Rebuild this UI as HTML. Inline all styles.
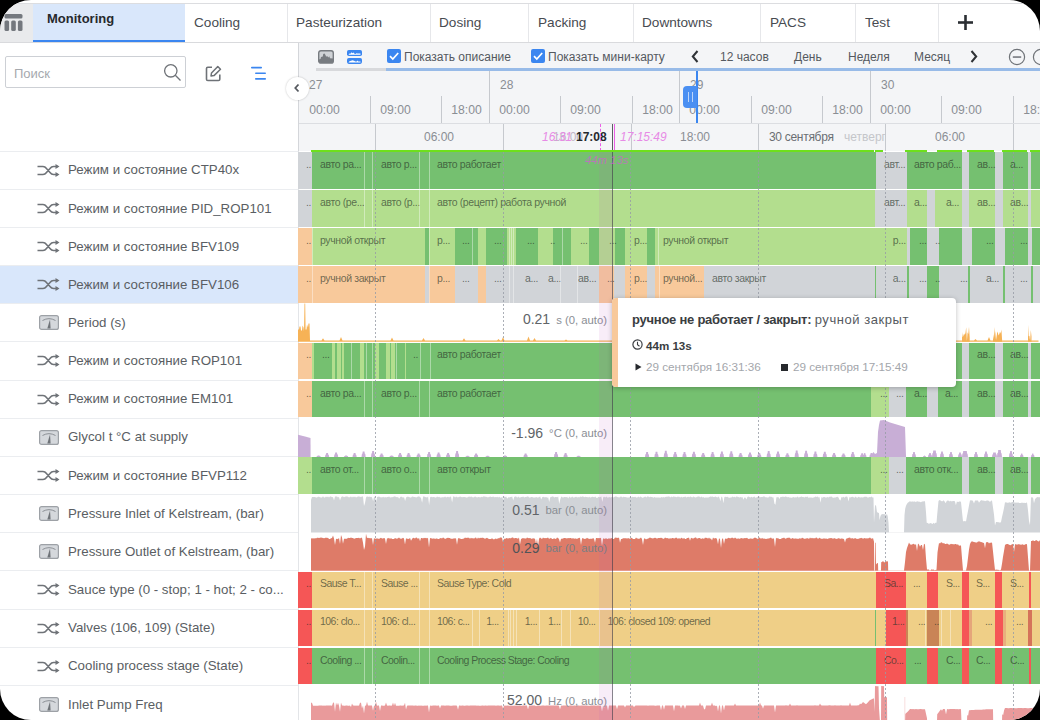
<!DOCTYPE html>
<html><head><meta charset="utf-8">
<style>
*{box-sizing:border-box;margin:0;padding:0}
html,body{width:1040px;height:720px;background:#000;overflow:hidden}
body{font-family:"Liberation Sans",sans-serif}
#scr{position:absolute;left:0;top:0;width:1040px;height:720px;border-radius:31px;overflow:hidden;background:#fff}
.a{position:absolute}
.t{position:absolute;white-space:nowrap;line-height:1}
.tab{position:absolute;top:0;height:38px;border-right:1px solid #e6e7ea;font-size:13.6px;color:#3e4247}
.tab span{position:absolute;top:13px;line-height:1}
.lt{position:absolute;left:68px;font-size:13.3px;color:#5a5e63;white-space:nowrap;line-height:1}
.lbl{position:absolute;font-size:12px;color:#8a8e94;white-space:nowrap;line-height:1}
.st{position:absolute;font-size:10.5px;letter-spacing:-0.38px;color:rgba(40,50,40,.66);white-space:nowrap;line-height:1}
</style></head><body>
<div id="scr">

<div class="a" style="left:0;top:3px;width:1040px;height:1px;background:#dcdde0"></div>
<div class="a" style="left:0;top:42px;width:1040px;height:1px;background:#d9dadd"></div>
<div class="a" style="left:0;top:4px;width:33px;height:38px;background:#e9eaec"></div>
<svg class="a" style="left:4px;top:14px" width="19" height="18" viewBox="0 0 19 18"><rect x="0.5" y="0" width="18" height="4.5" rx="1.5" fill="#74787e"/><rect x="0.5" y="6.5" width="4.6" height="10.5" rx="1.5" fill="#74787e"/><rect x="7.2" y="6.5" width="4.6" height="10.5" rx="1.5" fill="#74787e"/><rect x="13.9" y="6.5" width="4.6" height="10.5" rx="1.5" fill="#74787e"/></svg>
<div class="a" style="left:33px;top:4px;width:152px;height:38px;background:#d9e7fb"></div>
<div class="a" style="left:33px;top:40px;width:152px;height:2px;background:#3b86f0"></div>
<div class="t" style="left:47px;top:12px;font-weight:bold;color:#26292d;font-size:13px">Monitoring</div>
<div class="a" style="left:287px;top:4px;width:1px;height:38px;background:#e6e7ea"></div>
<div class="t" style="left:194px;top:16px;font-size:13.6px;color:#474b51">Cooling</div>
<div class="a" style="left:430px;top:4px;width:1px;height:38px;background:#e6e7ea"></div>
<div class="t" style="left:296px;top:16px;font-size:13.6px;color:#474b51">Pasteurization</div>
<div class="a" style="left:528px;top:4px;width:1px;height:38px;background:#e6e7ea"></div>
<div class="t" style="left:439px;top:16px;font-size:13.6px;color:#474b51">Dosing</div>
<div class="a" style="left:633px;top:4px;width:1px;height:38px;background:#e6e7ea"></div>
<div class="t" style="left:538px;top:16px;font-size:13.6px;color:#474b51">Packing</div>
<div class="a" style="left:760px;top:4px;width:1px;height:38px;background:#e6e7ea"></div>
<div class="t" style="left:642px;top:16px;font-size:13.6px;color:#474b51">Downtowns</div>
<div class="a" style="left:855px;top:4px;width:1px;height:38px;background:#e6e7ea"></div>
<div class="t" style="left:770px;top:16px;font-size:13.6px;color:#474b51">PACS</div>
<div class="a" style="left:938px;top:4px;width:1px;height:38px;background:#e6e7ea"></div>
<div class="t" style="left:865px;top:16px;font-size:13.6px;color:#474b51">Test</div>
<svg class="a" style="left:958px;top:15px" width="15" height="15" viewBox="0 0 15 15"><rect x="6.2" y="0" width="2.6" height="15" fill="#2b2e33"/><rect x="0" y="6.2" width="15" height="2.6" fill="#2b2e33"/></svg>
<div class="a" style="left:5px;top:56px;width:181px;height:32px;border:1px solid #cdd0d5;border-radius:2px;background:#fff"></div>
<div class="t" style="left:14px;top:67px;font-size:13px;color:#a6a9ae">Поиск</div>
<svg class="a" style="left:163px;top:63px" width="19" height="19" viewBox="0 0 19 19"><circle cx="7.8" cy="7.8" r="6.2" fill="none" stroke="#6f7378" stroke-width="1.3"/><line x1="12.3" y1="12.3" x2="17.5" y2="17.5" stroke="#6f7378" stroke-width="1.3"/></svg>
<svg class="a" style="left:205px;top:65px" width="17" height="17" viewBox="0 0 17 17"><path d="M7 2.2H2.8Q1.5 2.2 1.5 3.5V14.2Q1.5 15.5 2.8 15.5H13.5Q14.8 15.5 14.8 14.2V9.5" fill="none" stroke="#6e7277" stroke-width="1.6"/><path d="M6 11L6.5 8L12.8 1.5L15.5 4.2L9 10.6Z" fill="none" stroke="#6e7277" stroke-width="1.5" stroke-linejoin="round"/></svg>
<svg class="a" style="left:250px;top:66px" width="18" height="14" viewBox="0 0 18 14"><rect x="1" y="0.8" width="11" height="1.7" rx="0.8" fill="#3b86f0"/><rect x="5" y="6.4" width="11" height="1.7" rx="0.8" fill="#3b86f0"/><rect x="5" y="12" width="11" height="1.7" rx="0.8" fill="#3b86f0"/></svg>
<div class="a" style="left:298px;top:43px;width:742px;height:108px;background:#f4f5f7"></div>
<div class="a" style="left:298px;top:43px;width:1px;height:108px;background:#d4d6da"></div>
<div class="a" style="left:316px;top:68px;width:70px;height:3px;background:#d8d9dc"></div>
<div class="a" style="left:386px;top:68px;width:654px;height:3px;background:#98bbe8"></div>
<svg class="a" style="left:318px;top:49.5px" width="16" height="14" viewBox="0 0 16 14"><rect x="0.7" y="0.7" width="14.6" height="12.4" rx="2.2" fill="#cfd2d6" stroke="#777b80" stroke-width="1.4"/><path d="M0.7 9.5L2.5 9L3 7L4.8 6.5L5.2 4L6.5 3.6L7.5 5L8 6.5L9.5 6.2L10.3 7.5L11.3 6.3L12 8.2L15.3 8.5L15.3 11Q15.3 13.1 13.2 13.1L2.8 13.1Q0.7 13.1 0.7 11Z" fill="#777b80"/></svg>
<svg class="a" style="left:347px;top:49.5px" width="15" height="14" viewBox="0 0 15 14"><rect x="0" y="0" width="15" height="6" rx="1.8" fill="#3b86f0"/><rect x="0" y="7.9" width="15" height="6" rx="1.8" fill="#3b86f0"/><path d="M1.5 4.8L2.5 3.6L3.8 3.4L4.5 2.3L5.5 3.2L6.5 2.6L7.5 3.8L8.5 4L9.5 3.2L10.5 3.4L13.5 3.4L13.5 4.8Z" fill="#fff"/><path d="M1.5 12.4L2.5 11.3L4 10.8L5.5 10.3L7 10.8L8.5 11.6L9.7 11.5L10.5 10.5L11.2 11.6L13.5 11.6L13.5 12.4Z" fill="#fff"/></svg>
<svg class="a" style="left:387px;top:49px" width="14" height="14" viewBox="0 0 14 14"><rect x="0" y="0" width="14" height="14" rx="2" fill="#3b86f0"/><path d="M3 7.2L5.8 10L11.2 4" fill="none" stroke="#fff" stroke-width="1.7"/></svg>
<div class="t" style="left:404px;top:51px;font-size:12px;color:#55595f">Показать описание</div>
<svg class="a" style="left:531px;top:49px" width="14" height="14" viewBox="0 0 14 14"><rect x="0" y="0" width="14" height="14" rx="2" fill="#3b86f0"/><path d="M3 7.2L5.8 10L11.2 4" fill="none" stroke="#fff" stroke-width="1.7"/></svg>
<div class="t" style="left:548px;top:51px;font-size:12px;color:#55595f">Показать мини-карту</div>
<svg class="a" style="left:691px;top:50px" width="8" height="13" viewBox="0 0 8 13"><path d="M6.5 1L1.8 6.5L6.5 12" fill="none" stroke="#2f3236" stroke-width="2"/></svg>
<div class="t" style="left:720px;top:51px;font-size:12px;color:#55595f">12 часов</div>
<div class="t" style="left:794px;top:51px;font-size:12px;color:#55595f">День</div>
<div class="t" style="left:848px;top:51px;font-size:12px;color:#55595f">Неделя</div>
<div class="t" style="left:914px;top:51px;font-size:12px;color:#55595f">Месяц</div>
<svg class="a" style="left:970px;top:50px" width="8" height="13" viewBox="0 0 8 13"><path d="M1.5 1L6.2 6.5L1.5 12" fill="none" stroke="#2f3236" stroke-width="2"/></svg>
<svg class="a" style="left:1008px;top:48px" width="18" height="18" viewBox="0 0 18 18"><circle cx="9" cy="9" r="7.6" fill="none" stroke="#6f7378" stroke-width="1.2"/><rect x="4.8" y="8.3" width="8.4" height="1.5" fill="#6f7378"/></svg>
<svg class="a" style="left:1032px;top:48px" width="18" height="18" viewBox="0 0 18 18"><circle cx="9" cy="9" r="7.6" fill="none" stroke="#6f7378" stroke-width="1.2"/></svg>
<div class="a" style="left:299px;top:123px;width:741px;height:1px;background:#dcdee2"></div>
<div class="t" style="left:309px;top:79px;font-size:12px;color:#8a8e94">27</div>
<div class="a" style="left:489.0px;top:71px;width:1px;height:52px;background:#c6c9ce"></div>
<div class="t" style="left:500.0px;top:79px;font-size:12px;color:#8a8e94">28</div>
<div class="a" style="left:679.1px;top:71px;width:1px;height:52px;background:#c6c9ce"></div>
<div class="t" style="left:690.1px;top:79px;font-size:12px;color:#8a8e94">29</div>
<div class="a" style="left:870.0px;top:71px;width:1px;height:52px;background:#c6c9ce"></div>
<div class="t" style="left:881.0px;top:79px;font-size:12px;color:#8a8e94">30</div>
<div class="t" style="left:309.2px;top:104px;font-size:12.2px;color:#8a8e94">00:00</div>
<div class="a" style="left:370px;top:96px;width:1px;height:27px;background:#c6c9ce"></div>
<div class="t" style="left:380.2px;top:104px;font-size:12.2px;color:#8a8e94">09:00</div>
<div class="a" style="left:441px;top:96px;width:1px;height:27px;background:#c6c9ce"></div>
<div class="t" style="left:451.2px;top:104px;font-size:12.2px;color:#8a8e94">18:00</div>
<div class="t" style="left:499.2px;top:104px;font-size:12.2px;color:#8a8e94">00:00</div>
<div class="a" style="left:560px;top:96px;width:1px;height:27px;background:#c6c9ce"></div>
<div class="t" style="left:570.2px;top:104px;font-size:12.2px;color:#8a8e94">09:00</div>
<div class="a" style="left:632px;top:96px;width:1px;height:27px;background:#c6c9ce"></div>
<div class="t" style="left:642.2px;top:104px;font-size:12.2px;color:#8a8e94">18:00</div>
<div class="t" style="left:689.2px;top:104px;font-size:12.2px;color:#8a8e94">00:00</div>
<div class="a" style="left:751px;top:96px;width:1px;height:27px;background:#c6c9ce"></div>
<div class="t" style="left:761.2px;top:104px;font-size:12.2px;color:#8a8e94">09:00</div>
<div class="a" style="left:822px;top:96px;width:1px;height:27px;background:#c6c9ce"></div>
<div class="t" style="left:832.2px;top:104px;font-size:12.2px;color:#8a8e94">18:00</div>
<div class="t" style="left:880.2px;top:104px;font-size:12.2px;color:#8a8e94">00:00</div>
<div class="a" style="left:941px;top:96px;width:1px;height:27px;background:#c6c9ce"></div>
<div class="t" style="left:951.2px;top:104px;font-size:12.2px;color:#8a8e94">09:00</div>
<div class="a" style="left:1013px;top:96px;width:1px;height:27px;background:#c6c9ce"></div>
<div class="t" style="left:1023.2px;top:104px;font-size:12.2px;color:#8a8e94">18:00</div>
<div class="a" style="left:695.5px;top:71px;width:2px;height:52px;background:#3b86f0"></div>
<div class="a" style="left:683px;top:86px;width:13.5px;height:21.5px;background:#4a8ff2;border-radius:4px 0 0 4px"></div>
<div class="a" style="left:688px;top:92px;width:1px;height:10px;background:#bcd5fa"></div><div class="a" style="left:692px;top:92px;width:1px;height:10px;background:#bcd5fa"></div>
<div class="a" style="left:374.8px;top:124px;width:1px;height:27px;background:#c6c9ce"></div>
<div class="a" style="left:503.0px;top:124px;width:1px;height:27px;background:#c6c9ce"></div>
<div class="a" style="left:630.5px;top:124px;width:1px;height:27px;background:#c6c9ce"></div>
<div class="a" style="left:758.0px;top:124px;width:1px;height:27px;background:#c6c9ce"></div>
<div class="a" style="left:885.3px;top:124px;width:1px;height:27px;background:#c6c9ce"></div>
<div class="a" style="left:1012.8px;top:124px;width:1px;height:27px;background:#c6c9ce"></div>
<div class="t" style="left:424px;top:131px;font-size:12px;color:#8a8e94">06:00</div>
<div class="t" style="left:680px;top:131px;font-size:12px;color:#8a8e94">18:00</div>
<div class="t" style="left:935px;top:131px;font-size:12px;color:#8a8e94">06:00</div>
<div class="t" style="left:769px;top:131px;font-size:12px;color:#6a6e73;letter-spacing:-0.3px">30 сентября</div>
<div class="a" style="left:844px;top:124px;width:42px;height:26px;overflow:hidden"><div class="t" style="left:0;top:7px;font-size:12px;color:#c4c6ca">четверг</div></div>
<div class="t" style="left:553px;top:131px;font-size:12px;color:#c0b6c6">16:00</div>
<div class="t" style="left:542px;top:131px;font-size:12px;color:#e78be6;font-style:italic">16:31</div>
<div class="t" style="left:576px;top:131px;font-size:12px;color:#26292d;font-weight:bold">17:08</div>
<div class="t" style="left:620px;top:131px;font-size:12px;color:#e78be6;font-style:italic">17:15:49</div>
<div class="a" style="left:599.5px;top:124px;width:0;height:27px;border-left:1.2px dashed #ec5fe8"></div>
<div class="a" style="left:613.5px;top:124px;width:1.5px;height:27px;background:#ec5fe8"></div>
<div class="a" style="left:612px;top:124px;width:1px;height:27px;background:#5b5e63"></div>
<div class="a" style="left:285.5px;top:76.5px;width:23px;height:23px;border-radius:50%;background:#fff;box-shadow:0 0 2px rgba(0,0,0,.25)"></div>
<svg class="a" style="left:293px;top:83px" width="8" height="10" viewBox="0 0 8 10"><path d="M5.5 1.5L2.3 5L5.5 8.5" fill="none" stroke="#55595f" stroke-width="1.8"/></svg>
<div class="a" style="left:0;top:150.7px;width:298px;height:1px;background:#ebedf0"></div>
<svg class="a" style="left:37px;top:163.7px" width="23" height="13" viewBox="0 0 23 13"><path d="M0.5 2.5H6Q8 2.5 9.5 4.5L13 8.5Q14.5 10.5 16.5 10.5H21M0.5 10.5H6Q8 10.5 9.5 8.5L13 4.5Q14.5 2.5 16.5 2.5H21" fill="none" stroke="#6f7378" stroke-width="1.6"/><path d="M18.5 0L22.5 2.5L18.5 5Z M18.5 8L22.5 10.5L18.5 13Z" fill="#6f7378"/></svg>
<div class="lt" style="top:163.4px">Режим и состояние CTP40x</div>
<div class="a" style="left:0;top:188.8px;width:298px;height:1px;background:#ebedf0"></div>
<svg class="a" style="left:37px;top:201.8px" width="23" height="13" viewBox="0 0 23 13"><path d="M0.5 2.5H6Q8 2.5 9.5 4.5L13 8.5Q14.5 10.5 16.5 10.5H21M0.5 10.5H6Q8 10.5 9.5 8.5L13 4.5Q14.5 2.5 16.5 2.5H21" fill="none" stroke="#6f7378" stroke-width="1.6"/><path d="M18.5 0L22.5 2.5L18.5 5Z M18.5 8L22.5 10.5L18.5 13Z" fill="#6f7378"/></svg>
<div class="lt" style="top:201.5px">Режим и состояние PID_ROP101</div>
<div class="a" style="left:0;top:227.0px;width:298px;height:1px;background:#ebedf0"></div>
<svg class="a" style="left:37px;top:240.0px" width="23" height="13" viewBox="0 0 23 13"><path d="M0.5 2.5H6Q8 2.5 9.5 4.5L13 8.5Q14.5 10.5 16.5 10.5H21M0.5 10.5H6Q8 10.5 9.5 8.5L13 4.5Q14.5 2.5 16.5 2.5H21" fill="none" stroke="#6f7378" stroke-width="1.6"/><path d="M18.5 0L22.5 2.5L18.5 5Z M18.5 8L22.5 10.5L18.5 13Z" fill="#6f7378"/></svg>
<div class="lt" style="top:239.7px">Режим и состояние BFV109</div>
<div class="a" style="left:0;top:265.6px;width:298px;height:38.15px;background:#d9e7fb"></div>
<div class="a" style="left:0;top:265.1px;width:298px;height:1px;background:#ebedf0"></div>
<svg class="a" style="left:37px;top:278.1px" width="23" height="13" viewBox="0 0 23 13"><path d="M0.5 2.5H6Q8 2.5 9.5 4.5L13 8.5Q14.5 10.5 16.5 10.5H21M0.5 10.5H6Q8 10.5 9.5 8.5L13 4.5Q14.5 2.5 16.5 2.5H21" fill="none" stroke="#6f7378" stroke-width="1.6"/><path d="M18.5 0L22.5 2.5L18.5 5Z M18.5 8L22.5 10.5L18.5 13Z" fill="#6f7378"/></svg>
<div class="lt" style="top:277.8px">Режим и состояние BFV106</div>
<div class="a" style="left:0;top:303.3px;width:298px;height:1px;background:#ebedf0"></div>
<svg class="a" style="left:38.5px;top:315.3px" width="20" height="15" viewBox="0 0 20 15"><rect x="0.6" y="0.6" width="18.8" height="13.8" rx="2" fill="#d5d8dc" stroke="#9da1a6" stroke-width="1.2"/><path d="M3.5 5.5Q10 1.8 16.5 5.5" fill="none" stroke="#8c9096" stroke-width="1"/><path d="M8.3 13.5L11 4.5L11.6 13.5Z" fill="#6f7378"/></svg>
<div class="lt" style="top:316.0px">Period (s)</div>
<div class="a" style="left:0;top:341.4px;width:298px;height:1px;background:#ebedf0"></div>
<svg class="a" style="left:37px;top:354.4px" width="23" height="13" viewBox="0 0 23 13"><path d="M0.5 2.5H6Q8 2.5 9.5 4.5L13 8.5Q14.5 10.5 16.5 10.5H21M0.5 10.5H6Q8 10.5 9.5 8.5L13 4.5Q14.5 2.5 16.5 2.5H21" fill="none" stroke="#6f7378" stroke-width="1.6"/><path d="M18.5 0L22.5 2.5L18.5 5Z M18.5 8L22.5 10.5L18.5 13Z" fill="#6f7378"/></svg>
<div class="lt" style="top:354.1px">Режим и состояние ROP101</div>
<div class="a" style="left:0;top:379.6px;width:298px;height:1px;background:#ebedf0"></div>
<svg class="a" style="left:37px;top:392.6px" width="23" height="13" viewBox="0 0 23 13"><path d="M0.5 2.5H6Q8 2.5 9.5 4.5L13 8.5Q14.5 10.5 16.5 10.5H21M0.5 10.5H6Q8 10.5 9.5 8.5L13 4.5Q14.5 2.5 16.5 2.5H21" fill="none" stroke="#6f7378" stroke-width="1.6"/><path d="M18.5 0L22.5 2.5L18.5 5Z M18.5 8L22.5 10.5L18.5 13Z" fill="#6f7378"/></svg>
<div class="lt" style="top:392.3px">Режим и состояние EM101</div>
<div class="a" style="left:0;top:417.8px;width:298px;height:1px;background:#ebedf0"></div>
<svg class="a" style="left:38.5px;top:429.8px" width="20" height="15" viewBox="0 0 20 15"><rect x="0.6" y="0.6" width="18.8" height="13.8" rx="2" fill="#d5d8dc" stroke="#9da1a6" stroke-width="1.2"/><path d="M3.5 5.5Q10 1.8 16.5 5.5" fill="none" stroke="#8c9096" stroke-width="1"/><path d="M8.3 13.5L11 4.5L11.6 13.5Z" fill="#6f7378"/></svg>
<div class="lt" style="top:430.4px">Glycol t °C at supply</div>
<div class="a" style="left:0;top:455.9px;width:298px;height:1px;background:#ebedf0"></div>
<svg class="a" style="left:37px;top:468.9px" width="23" height="13" viewBox="0 0 23 13"><path d="M0.5 2.5H6Q8 2.5 9.5 4.5L13 8.5Q14.5 10.5 16.5 10.5H21M0.5 10.5H6Q8 10.5 9.5 8.5L13 4.5Q14.5 2.5 16.5 2.5H21" fill="none" stroke="#6f7378" stroke-width="1.6"/><path d="M18.5 0L22.5 2.5L18.5 5Z M18.5 8L22.5 10.5L18.5 13Z" fill="#6f7378"/></svg>
<div class="lt" style="top:468.6px">Режим и состояние BFVP112</div>
<div class="a" style="left:0;top:494.0px;width:298px;height:1px;background:#ebedf0"></div>
<svg class="a" style="left:38.5px;top:506.0px" width="20" height="15" viewBox="0 0 20 15"><rect x="0.6" y="0.6" width="18.8" height="13.8" rx="2" fill="#d5d8dc" stroke="#9da1a6" stroke-width="1.2"/><path d="M3.5 5.5Q10 1.8 16.5 5.5" fill="none" stroke="#8c9096" stroke-width="1"/><path d="M8.3 13.5L11 4.5L11.6 13.5Z" fill="#6f7378"/></svg>
<div class="lt" style="top:506.7px">Pressure Inlet of Kelstream, (bar)</div>
<div class="a" style="left:0;top:532.2px;width:298px;height:1px;background:#ebedf0"></div>
<svg class="a" style="left:38.5px;top:544.2px" width="20" height="15" viewBox="0 0 20 15"><rect x="0.6" y="0.6" width="18.8" height="13.8" rx="2" fill="#d5d8dc" stroke="#9da1a6" stroke-width="1.2"/><path d="M3.5 5.5Q10 1.8 16.5 5.5" fill="none" stroke="#8c9096" stroke-width="1"/><path d="M8.3 13.5L11 4.5L11.6 13.5Z" fill="#6f7378"/></svg>
<div class="lt" style="top:544.9px">Pressure Outlet of Kelstream, (bar)</div>
<div class="a" style="left:0;top:570.3px;width:298px;height:1px;background:#ebedf0"></div>
<svg class="a" style="left:37px;top:583.3px" width="23" height="13" viewBox="0 0 23 13"><path d="M0.5 2.5H6Q8 2.5 9.5 4.5L13 8.5Q14.5 10.5 16.5 10.5H21M0.5 10.5H6Q8 10.5 9.5 8.5L13 4.5Q14.5 2.5 16.5 2.5H21" fill="none" stroke="#6f7378" stroke-width="1.6"/><path d="M18.5 0L22.5 2.5L18.5 5Z M18.5 8L22.5 10.5L18.5 13Z" fill="#6f7378"/></svg>
<div class="lt" style="top:583.0px">Sauce type (0 - stop; 1 - hot; 2 - co...</div>
<div class="a" style="left:0;top:608.5px;width:298px;height:1px;background:#ebedf0"></div>
<svg class="a" style="left:37px;top:621.5px" width="23" height="13" viewBox="0 0 23 13"><path d="M0.5 2.5H6Q8 2.5 9.5 4.5L13 8.5Q14.5 10.5 16.5 10.5H21M0.5 10.5H6Q8 10.5 9.5 8.5L13 4.5Q14.5 2.5 16.5 2.5H21" fill="none" stroke="#6f7378" stroke-width="1.6"/><path d="M18.5 0L22.5 2.5L18.5 5Z M18.5 8L22.5 10.5L18.5 13Z" fill="#6f7378"/></svg>
<div class="lt" style="top:621.2px">Valves (106, 109) (State)</div>
<div class="a" style="left:0;top:646.6px;width:298px;height:1px;background:#ebedf0"></div>
<svg class="a" style="left:37px;top:659.6px" width="23" height="13" viewBox="0 0 23 13"><path d="M0.5 2.5H6Q8 2.5 9.5 4.5L13 8.5Q14.5 10.5 16.5 10.5H21M0.5 10.5H6Q8 10.5 9.5 8.5L13 4.5Q14.5 2.5 16.5 2.5H21" fill="none" stroke="#6f7378" stroke-width="1.6"/><path d="M18.5 0L22.5 2.5L18.5 5Z M18.5 8L22.5 10.5L18.5 13Z" fill="#6f7378"/></svg>
<div class="lt" style="top:659.4px">Cooling process stage (State)</div>
<div class="a" style="left:0;top:684.8px;width:298px;height:1px;background:#ebedf0"></div>
<svg class="a" style="left:38.5px;top:696.8px" width="20" height="15" viewBox="0 0 20 15"><rect x="0.6" y="0.6" width="18.8" height="13.8" rx="2" fill="#d5d8dc" stroke="#9da1a6" stroke-width="1.2"/><path d="M3.5 5.5Q10 1.8 16.5 5.5" fill="none" stroke="#8c9096" stroke-width="1"/><path d="M8.3 13.5L11 4.5L11.6 13.5Z" fill="#6f7378"/></svg>
<div class="lt" style="top:697.5px">Inlet Pump Freq</div>
<div class="a" style="left:298px;top:151px;width:1px;height:569px;background:#e3e5e8"></div>
<div class="a" style="left:298px;top:152.0px;width:14px;height:36.6px;background:#d1d4d8"></div>
<div class="a" style="left:312px;top:152.0px;width:564px;height:36.6px;background:#75c070"></div>
<div class="a" style="left:876px;top:152.0px;width:31px;height:36.6px;background:#d1d4d8"></div>
<div class="a" style="left:907px;top:152.0px;width:55px;height:36.6px;background:#75c070"></div>
<div class="a" style="left:962px;top:152.0px;width:7px;height:36.6px;background:#d1d4d8"></div>
<div class="a" style="left:969px;top:152.0px;width:26px;height:36.6px;background:#75c070"></div>
<div class="a" style="left:995px;top:152.0px;width:8px;height:36.6px;background:#d1d4d8"></div>
<div class="a" style="left:1003px;top:152.0px;width:25px;height:36.6px;background:#75c070"></div>
<div class="a" style="left:1028px;top:152.0px;width:3px;height:36.6px;background:#d1d4d8"></div>
<div class="a" style="left:1031px;top:152.0px;width:9px;height:36.6px;background:#75c070"></div>
<div class="st" style="left:306px;top:158.6px">..</div>
<div class="st" style="left:320px;top:158.6px">авто ра...</div>
<div class="st" style="left:381px;top:158.6px">авто р...</div>
<div class="st" style="left:437px;top:158.6px">авто работает</div>
<div class="st" style="left:884px;top:158.6px">авт...</div>
<div class="st" style="left:914px;top:158.6px">авто раб...</div>
<div class="st" style="left:977px;top:158.6px">ав...</div>
<div class="st" style="left:1010px;top:158.6px">а...</div>
<div class="a" style="left:363.5px;top:152.0px;width:1px;height:36.6px;background:rgba(255,255,255,.4)"></div>
<div class="a" style="left:372.0px;top:152.0px;width:1px;height:36.6px;background:rgba(255,255,255,.4)"></div>
<div class="a" style="left:419.4px;top:152.0px;width:1px;height:36.6px;background:rgba(255,255,255,.4)"></div>
<div class="a" style="left:429.4px;top:152.0px;width:1px;height:36.6px;background:rgba(255,255,255,.4)"></div>
<div class="a" style="left:298px;top:190.2px;width:14px;height:36.6px;background:#d1d4d8"></div>
<div class="a" style="left:312px;top:190.2px;width:563px;height:36.6px;background:#b3de8e"></div>
<div class="a" style="left:875px;top:190.2px;width:32px;height:36.6px;background:#d1d4d8"></div>
<div class="a" style="left:907px;top:190.2px;width:20px;height:36.6px;background:#b3de8e"></div>
<div class="a" style="left:927px;top:190.2px;width:8px;height:36.6px;background:#d1d4d8"></div>
<div class="a" style="left:935px;top:190.2px;width:27px;height:36.6px;background:#b3de8e"></div>
<div class="a" style="left:962px;top:190.2px;width:7px;height:36.6px;background:#d1d4d8"></div>
<div class="a" style="left:969px;top:190.2px;width:26px;height:36.6px;background:#b3de8e"></div>
<div class="a" style="left:995px;top:190.2px;width:8px;height:36.6px;background:#d1d4d8"></div>
<div class="a" style="left:1003px;top:190.2px;width:25px;height:36.6px;background:#b3de8e"></div>
<div class="a" style="left:1028px;top:190.2px;width:3px;height:36.6px;background:#d1d4d8"></div>
<div class="a" style="left:1031px;top:190.2px;width:9px;height:36.6px;background:#b3de8e"></div>
<div class="st" style="left:306px;top:196.8px">..</div>
<div class="st" style="left:320px;top:196.8px">авто (ре...</div>
<div class="st" style="left:381px;top:196.8px">авто (р...</div>
<div class="st" style="left:437px;top:196.8px">авто (рецепт) работа ручной</div>
<div class="st" style="left:884px;top:196.8px">авт...</div>
<div class="st" style="left:914px;top:196.8px">а...</div>
<div class="st" style="left:946px;top:196.8px">а...</div>
<div class="st" style="left:977px;top:196.8px">ав...</div>
<div class="st" style="left:1010px;top:196.8px">ав...</div>
<div class="a" style="left:363.5px;top:190.2px;width:1px;height:36.6px;background:rgba(255,255,255,.4)"></div>
<div class="a" style="left:372.0px;top:190.2px;width:1px;height:36.6px;background:rgba(255,255,255,.4)"></div>
<div class="a" style="left:419.4px;top:190.2px;width:1px;height:36.6px;background:rgba(255,255,255,.4)"></div>
<div class="a" style="left:429.4px;top:190.2px;width:1px;height:36.6px;background:rgba(255,255,255,.4)"></div>
<div class="a" style="left:298px;top:228.3px;width:14px;height:36.6px;background:#f8c99b"></div>
<div class="a" style="left:312px;top:228.3px;width:113px;height:36.6px;background:#b3de8e"></div>
<div class="a" style="left:425px;top:228.3px;width:4px;height:36.6px;background:#75c070"></div>
<div class="a" style="left:429px;top:228.3px;width:26px;height:36.6px;background:#b3de8e"></div>
<div class="a" style="left:455px;top:228.3px;width:23px;height:36.6px;background:#75c070"></div>
<div class="a" style="left:478px;top:228.3px;width:8px;height:36.6px;background:#b3de8e"></div>
<div class="a" style="left:486px;top:228.3px;width:21px;height:36.6px;background:#75c070"></div>
<div class="a" style="left:507px;top:228.3px;width:9px;height:36.6px;background:#b3de8e"></div>
<div class="a" style="left:516px;top:228.3px;width:22px;height:36.6px;background:#75c070"></div>
<div class="a" style="left:538px;top:228.3px;width:15px;height:36.6px;background:#b3de8e"></div>
<div class="a" style="left:553px;top:228.3px;width:18px;height:36.6px;background:#75c070"></div>
<div class="a" style="left:571px;top:228.3px;width:18px;height:36.6px;background:#b3de8e"></div>
<div class="a" style="left:589px;top:228.3px;width:10px;height:36.6px;background:#75c070"></div>
<div class="a" style="left:599px;top:228.3px;width:16px;height:36.6px;background:#b3de8e"></div>
<div class="a" style="left:615px;top:228.3px;width:10px;height:36.6px;background:#75c070"></div>
<div class="a" style="left:625px;top:228.3px;width:22px;height:36.6px;background:#b3de8e"></div>
<div class="a" style="left:647px;top:228.3px;width:8px;height:36.6px;background:#75c070"></div>
<div class="a" style="left:655px;top:228.3px;width:252px;height:36.6px;background:#b3de8e"></div>
<div class="a" style="left:907px;top:228.3px;width:3px;height:36.6px;background:#d1d4d8"></div>
<div class="a" style="left:910px;top:228.3px;width:17px;height:36.6px;background:#75c070"></div>
<div class="a" style="left:927px;top:228.3px;width:12px;height:36.6px;background:#d1d4d8"></div>
<div class="a" style="left:939px;top:228.3px;width:23px;height:36.6px;background:#75c070"></div>
<div class="a" style="left:962px;top:228.3px;width:10px;height:36.6px;background:#d1d4d8"></div>
<div class="a" style="left:972px;top:228.3px;width:23px;height:36.6px;background:#75c070"></div>
<div class="a" style="left:995px;top:228.3px;width:10px;height:36.6px;background:#d1d4d8"></div>
<div class="a" style="left:1005px;top:228.3px;width:23px;height:36.6px;background:#75c070"></div>
<div class="a" style="left:1028px;top:228.3px;width:4px;height:36.6px;background:#d1d4d8"></div>
<div class="a" style="left:1032px;top:228.3px;width:8px;height:36.6px;background:#75c070"></div>
<div class="st" style="left:306px;top:234.9px">..</div>
<div class="st" style="left:320px;top:234.9px">ручной открыт</div>
<div class="st" style="left:437px;top:234.9px">р...</div>
<div class="st" style="left:462px;top:234.9px">...</div>
<div class="st" style="left:494px;top:234.9px">...</div>
<div class="st" style="left:527px;top:234.9px">...</div>
<div class="st" style="left:550px;top:234.9px">..</div>
<div class="st" style="left:580px;top:234.9px">...</div>
<div class="st" style="left:609px;top:234.9px">...</div>
<div class="st" style="left:634px;top:234.9px">р...</div>
<div class="st" style="left:663px;top:234.9px">ручной открыт</div>
<div class="st" style="left:892.7px;top:234.9px">р...</div>
<div class="st" style="left:919px;top:234.9px">...</div>
<div class="st" style="left:935px;top:234.9px">..</div>
<div class="st" style="left:986px;top:234.9px">...</div>
<div class="st" style="left:1020px;top:234.9px">...</div>
<div class="a" style="left:312.0px;top:228.3px;width:1px;height:36.6px;background:rgba(255,255,255,.4)"></div>
<div class="a" style="left:429.0px;top:228.3px;width:1px;height:36.6px;background:rgba(255,255,255,.4)"></div>
<div class="a" style="left:472.0px;top:228.3px;width:1px;height:36.6px;background:rgba(255,255,255,.4)"></div>
<div class="a" style="left:509.0px;top:228.3px;width:1px;height:36.6px;background:rgba(255,255,255,.4)"></div>
<div class="a" style="left:511.0px;top:228.3px;width:1px;height:36.6px;background:rgba(255,255,255,.4)"></div>
<div class="a" style="left:513.0px;top:228.3px;width:1px;height:36.6px;background:rgba(255,255,255,.4)"></div>
<div class="a" style="left:562.0px;top:228.3px;width:1px;height:36.6px;background:rgba(255,255,255,.4)"></div>
<div class="a" style="left:658.0px;top:228.3px;width:1px;height:36.6px;background:rgba(255,255,255,.4)"></div>
<div class="a" style="left:298px;top:266.4px;width:14px;height:36.6px;background:#f8c99b"></div>
<div class="a" style="left:312px;top:266.4px;width:113px;height:36.6px;background:#f8c99b"></div>
<div class="a" style="left:425px;top:266.4px;width:4px;height:36.6px;background:#d1d4d8"></div>
<div class="a" style="left:429px;top:266.4px;width:26px;height:36.6px;background:#f8c99b"></div>
<div class="a" style="left:455px;top:266.4px;width:23px;height:36.6px;background:#d1d4d8"></div>
<div class="a" style="left:478px;top:266.4px;width:8px;height:36.6px;background:#f8c99b"></div>
<div class="a" style="left:486px;top:266.4px;width:113px;height:36.6px;background:#d1d4d8"></div>
<div class="a" style="left:599px;top:266.4px;width:15px;height:36.6px;background:#f8c99b"></div>
<div class="a" style="left:614px;top:266.4px;width:11px;height:36.6px;background:#d1d4d8"></div>
<div class="a" style="left:625px;top:266.4px;width:22px;height:36.6px;background:#f8c99b"></div>
<div class="a" style="left:647px;top:266.4px;width:8px;height:36.6px;background:#d1d4d8"></div>
<div class="a" style="left:655px;top:266.4px;width:49px;height:36.6px;background:#f8c99b"></div>
<div class="a" style="left:704px;top:266.4px;width:171px;height:36.6px;background:#d1d4d8"></div>
<div class="a" style="left:875px;top:266.4px;width:1px;height:36.6px;background:#75c070"></div>
<div class="a" style="left:876px;top:266.4px;width:31px;height:36.6px;background:#d1d4d8"></div>
<div class="a" style="left:907px;top:266.4px;width:2px;height:36.6px;background:#75c070"></div>
<div class="a" style="left:909px;top:266.4px;width:18px;height:36.6px;background:#d1d4d8"></div>
<div class="a" style="left:927px;top:266.4px;width:12px;height:36.6px;background:#75c070"></div>
<div class="a" style="left:939px;top:266.4px;width:29px;height:36.6px;background:#d1d4d8"></div>
<div class="a" style="left:968px;top:266.4px;width:2px;height:36.6px;background:#75c070"></div>
<div class="a" style="left:970px;top:266.4px;width:33px;height:36.6px;background:#d1d4d8"></div>
<div class="a" style="left:1003px;top:266.4px;width:2px;height:36.6px;background:#75c070"></div>
<div class="a" style="left:1005px;top:266.4px;width:26px;height:36.6px;background:#d1d4d8"></div>
<div class="a" style="left:1031px;top:266.4px;width:2px;height:36.6px;background:#75c070"></div>
<div class="a" style="left:1033px;top:266.4px;width:7px;height:36.6px;background:#d1d4d8"></div>
<div class="st" style="left:306px;top:273.1px">..</div>
<div class="st" style="left:320px;top:273.1px">ручной закрыт</div>
<div class="st" style="left:437px;top:273.1px">р...</div>
<div class="st" style="left:462px;top:273.1px">...</div>
<div class="st" style="left:494px;top:273.1px">...</div>
<div class="st" style="left:525px;top:273.1px">а...</div>
<div class="st" style="left:548px;top:273.1px">а...</div>
<div class="st" style="left:578px;top:273.1px">ав...</div>
<div class="st" style="left:607px;top:273.1px">...</div>
<div class="st" style="left:634px;top:273.1px">р...</div>
<div class="st" style="left:663px;top:273.1px">ручной...</div>
<div class="st" style="left:712px;top:273.1px">авто закрыт</div>
<div class="st" style="left:892.7px;top:273.1px">а...</div>
<div class="st" style="left:919px;top:273.1px">...</div>
<div class="st" style="left:935px;top:273.1px">..</div>
<div class="st" style="left:960px;top:273.1px">...</div>
<div class="st" style="left:986px;top:273.1px">а...</div>
<div class="st" style="left:1020px;top:273.1px">...</div>
<div class="a" style="left:312.0px;top:266.4px;width:1px;height:36.6px;background:rgba(255,255,255,.4)"></div>
<div class="a" style="left:429.0px;top:266.4px;width:1px;height:36.6px;background:rgba(255,255,255,.4)"></div>
<div class="a" style="left:509.0px;top:266.4px;width:1px;height:36.6px;background:rgba(255,255,255,.4)"></div>
<div class="a" style="left:513.0px;top:266.4px;width:1px;height:36.6px;background:rgba(255,255,255,.4)"></div>
<div class="a" style="left:560.0px;top:266.4px;width:1px;height:36.6px;background:rgba(255,255,255,.4)"></div>
<div class="a" style="left:577.0px;top:266.4px;width:1px;height:36.6px;background:rgba(255,255,255,.4)"></div>
<div class="a" style="left:659.0px;top:266.4px;width:1px;height:36.6px;background:rgba(255,255,255,.4)"></div>
<svg class="a" style="left:0;top:0" width="1040" height="720"><path d="M298.0 341.8 L298.0 329.5 L299.0 329.5 L299.5 326.5 L300.5 326.5 L301.0 330.5 L302.0 330.5 L302.5 325.5 L303.5 327.5 L304.0 331.5 L304.5 303.5 L305.2 303.5 L305.6 329.5 L306.5 329.5 L307.0 324.5 L308.0 327.5 L308.5 323.5 L309.5 323.5 L310.0 340.5 L311.0 340.5 L311.0 340.6 L312.5 340.6 L314.0 340.6 L315.5 340.6 L317.0 340.6 L318.5 340.6 L320.0 340.6 L321.5 340.6 L323.0 338.2 L324.5 340.6 L326.0 340.6 L327.5 340.6 L329.0 340.6 L330.5 340.6 L332.0 340.6 L333.5 340.6 L335.0 340.6 L336.5 340.6 L338.0 340.6 L339.5 340.6 L341.0 336.9 L342.5 340.6 L344.0 340.6 L345.5 340.6 L347.0 340.6 L348.5 340.6 L350.0 340.6 L351.5 340.6 L353.0 340.6 L354.5 340.6 L356.0 340.6 L357.5 340.6 L359.0 340.6 L360.5 340.6 L362.0 340.6 L363.5 340.6 L365.0 340.6 L366.5 340.6 L368.0 340.6 L369.5 340.6 L371.0 340.6 L372.5 340.6 L374.0 340.6 L375.5 340.6 L377.0 340.6 L378.5 340.6 L380.0 340.6 L381.5 340.6 L383.0 340.6 L384.5 340.6 L386.0 340.6 L387.5 340.6 L389.0 340.6 L390.5 340.6 L392.0 337.5 L393.5 340.6 L395.0 340.6 L396.5 340.6 L398.0 340.6 L399.5 340.6 L401.0 340.6 L402.5 340.6 L404.0 340.6 L405.5 340.6 L407.0 340.6 L408.5 340.6 L410.0 340.6 L411.5 340.6 L413.0 340.6 L414.5 340.6 L416.0 340.6 L417.5 340.6 L419.0 340.6 L420.5 340.6 L422.0 340.6 L423.5 338.1 L425.0 340.6 L426.5 340.6 L428.0 340.6 L429.5 340.6 L431.0 340.6 L432.5 340.6 L434.0 340.6 L435.5 340.6 L437.0 340.6 L438.5 340.6 L440.0 340.6 L441.5 340.6 L443.0 340.6 L444.5 340.6 L446.0 340.6 L447.5 340.6 L449.0 340.6 L450.5 340.6 L452.0 340.6 L453.5 340.6 L455.0 340.6 L456.5 340.6 L458.0 340.6 L459.5 340.6 L461.0 340.6 L462.5 340.6 L464.0 338.2 L465.5 340.6 L467.0 340.6 L468.5 340.6 L470.0 340.6 L471.5 340.6 L473.0 340.6 L474.5 340.6 L476.0 340.6 L477.5 340.6 L479.0 340.6 L480.5 340.6 L482.0 340.6 L483.5 340.6 L485.0 340.6 L486.5 340.6 L488.0 340.6 L489.5 340.6 L491.0 340.6 L492.5 340.6 L494.0 340.6 L495.5 340.6 L497.0 340.6 L498.5 339.0 L500.0 340.6 L501.5 340.6 L503.0 336.9 L504.5 340.6 L506.0 340.6 L507.5 340.6 L509.0 340.6 L510.5 340.6 L512.0 340.6 L513.5 340.6 L515.0 340.6 L516.5 340.6 L518.0 340.6 L519.5 340.6 L521.0 340.6 L522.5 340.6 L524.0 340.6 L525.5 340.6 L527.0 340.6 L528.5 336.6 L530.0 340.6 L531.5 340.6 L533.0 340.6 L534.5 337.9 L536.0 340.6 L537.5 340.6 L539.0 340.6 L540.5 340.6 L542.0 340.6 L543.5 340.6 L545.0 340.6 L546.5 340.6 L548.0 340.6 L549.5 340.6 L551.0 340.6 L552.5 340.6 L554.0 340.6 L555.5 340.6 L557.0 340.6 L558.5 340.6 L560.0 340.6 L561.5 340.6 L563.0 340.6 L564.5 340.6 L566.0 339.4 L567.5 340.6 L569.0 340.6 L570.5 340.6 L572.0 340.6 L573.5 340.6 L575.0 340.6 L576.5 340.6 L578.0 340.6 L579.5 340.6 L581.0 340.6 L582.5 340.6 L584.0 340.6 L585.5 340.6 L587.0 340.6 L588.5 340.6 L590.0 340.6 L591.5 340.6 L593.0 340.6 L594.5 340.6 L596.0 340.6 L597.5 340.6 L599.0 340.6 L600.5 340.6 L602.0 340.6 L603.5 340.6 L605.0 340.6 L606.5 340.6 L608.0 340.6 L609.5 340.6 L611.0 340.6 L612.5 340.6 L614.0 340.6 L615.5 340.6 L617.0 340.6 L618.5 340.6 L620.0 340.6 L621.5 340.6 L623.0 340.6 L624.5 340.6 L626.0 340.6 L627.5 340.6 L629.0 340.6 L630.5 340.6 L632.0 340.6 L633.5 340.6 L635.0 340.6 L636.5 336.6 L638.0 340.6 L639.5 340.6 L641.0 340.6 L642.5 340.6 L644.0 340.6 L645.5 340.6 L647.0 340.6 L648.5 340.6 L650.0 340.6 L651.5 340.6 L653.0 340.6 L654.5 340.6 L656.0 340.6 L657.5 340.6 L659.0 340.6 L660.5 340.6 L662.0 340.6 L663.5 340.6 L665.0 340.6 L666.5 340.6 L668.0 340.6 L669.5 340.6 L671.0 340.6 L672.5 340.6 L674.0 338.2 L675.5 340.6 L677.0 337.1 L678.5 340.6 L680.0 340.6 L681.5 340.6 L683.0 340.6 L684.5 340.6 L686.0 340.6 L687.5 340.6 L689.0 340.6 L690.5 340.6 L692.0 340.6 L693.5 340.6 L695.0 340.6 L696.5 340.6 L698.0 340.6 L699.5 340.6 L701.0 340.6 L702.5 340.6 L704.0 340.6 L705.5 340.6 L707.0 340.6 L708.5 340.6 L710.0 340.6 L711.5 340.6 L713.0 340.6 L714.5 340.6 L716.0 340.6 L717.5 340.6 L719.0 340.6 L720.5 340.6 L722.0 340.6 L723.5 340.6 L725.0 340.6 L726.5 340.6 L728.0 340.6 L729.5 340.6 L731.0 340.6 L732.5 340.6 L734.0 340.6 L735.5 340.6 L737.0 340.6 L738.5 340.6 L740.0 340.6 L741.5 340.6 L743.0 340.6 L744.5 340.6 L746.0 340.6 L747.5 340.6 L749.0 340.6 L750.5 340.6 L752.0 340.6 L753.5 340.6 L755.0 340.6 L756.5 340.6 L758.0 340.6 L759.5 340.6 L761.0 340.6 L762.5 340.6 L764.0 340.6 L765.5 340.6 L767.0 340.6 L768.5 340.6 L770.0 337.8 L771.5 340.6 L773.0 338.5 L774.5 340.6 L776.0 340.6 L777.5 340.6 L779.0 340.6 L780.5 340.6 L782.0 340.6 L783.5 340.6 L785.0 340.6 L786.5 337.2 L788.0 340.6 L789.5 340.6 L791.0 340.6 L792.5 340.6 L794.0 340.6 L795.5 340.6 L797.0 340.6 L798.5 340.6 L800.0 340.6 L801.5 340.6 L803.0 340.6 L804.5 340.6 L806.0 340.6 L807.5 340.6 L809.0 340.6 L810.5 340.6 L812.0 340.6 L813.5 340.6 L815.0 340.6 L816.5 340.6 L818.0 340.6 L819.5 340.6 L821.0 340.6 L822.5 340.6 L824.0 340.6 L825.5 340.6 L827.0 340.6 L828.5 340.6 L830.0 340.6 L831.5 340.6 L833.0 340.6 L834.5 340.6 L836.0 340.6 L837.5 340.6 L839.0 340.6 L840.5 340.6 L842.0 340.6 L843.5 340.6 L845.0 340.6 L846.5 340.6 L848.0 340.6 L849.5 338.7 L851.0 337.3 L852.5 340.6 L854.0 340.6 L855.5 340.6 L857.0 340.6 L858.5 340.6 L860.0 340.6 L861.5 340.6 L863.0 340.6 L864.5 340.6 L866.0 340.6 L867.5 340.6 L869.0 340.6 L870.5 340.6 L872.0 340.6 L873.5 340.6 L875.0 340.6 L876.5 340.6 L878.0 340.6 L879.5 340.6 L881.0 340.6 L882.5 340.6 L884.0 340.6 L885.5 340.6 L887.0 340.6 L888.5 340.6 L890.0 340.6 L891.5 340.6 L893.0 340.6 L894.5 340.6 L896.0 340.6 L897.5 340.6 L899.0 340.6 L900.5 340.6 L902.0 340.6 L903.5 340.6 L905.0 340.6 L906.5 340.6 L908.0 340.6 L909.5 340.6 L911.0 340.6 L912.5 340.6 L914.0 340.6 L915.5 340.6 L917.0 338.4 L918.5 340.6 L920.0 340.6 L921.5 340.6 L923.0 340.6 L924.5 338.7 L926.0 340.6 L927.5 340.6 L929.0 339.4 L930.5 340.6 L932.0 340.6 L933.5 340.6 L935.0 340.6 L936.5 340.6 L938.0 340.6 L939.5 340.6 L941.0 340.6 L942.5 340.6 L944.0 340.6 L945.5 340.6 L947.0 340.6 L948.5 340.6 L950.0 340.6 L951.5 337.0 L953.0 340.6 L954.5 340.6 L956.0 340.6 L957.5 340.6 L959.0 340.6 L960.5 340.6 L962.0 340.6 L963.5 340.6 L965.0 340.6 L966.5 340.6 L968.0 340.6 L969.5 340.6 L971.0 340.6 L972.5 340.6 L974.0 340.6 L975.5 339.1 L977.0 340.6 L978.5 340.6 L980.0 340.6 L981.5 340.6 L983.0 340.6 L984.5 340.6 L986.0 340.6 L987.5 340.6 L989.0 337.1 L990.5 340.6 L992.0 340.6 L993.5 340.6 L995.0 340.6 L996.5 340.6 L998.0 340.6 L999.5 340.6 L1001.0 340.6 L1002.5 340.6 L1004.0 340.6 L1005.5 340.6 L1007.0 340.6 L1008.5 340.6 L1010.0 340.6 L1011.5 340.6 L1013.0 340.6 L1014.5 340.6 L1016.0 340.6 L1017.5 340.6 L1019.0 340.6 L1020.5 340.6 L1022.0 340.6 L1023.5 340.6 L1025.0 340.6 L1026.5 340.6 L1028.0 340.6 L1029.5 339.3 L1031.0 340.6 L1032.5 340.6 L1034.0 340.6 L1035.5 340.6 L1037.0 340.6 L1038.5 340.6 L1038.5 341.8 Z" fill="#f6b256"/></svg>
<svg class="a" style="left:0;top:0" width="1040" height="720"><path d="M962.0 341.8 L962.0 332.1 L962.7 337.3 L963.4 335.8 L964.1 333.5 L964.8 334.9 L965.5 332.7 L966.2 327.2 L966.9 341.3 L967.6 332.2 L968.3 334.1 L969.0 326.8 L969.7 337.5 L969.7 341.8 Z" fill="#f6b256"/></svg>
<svg class="a" style="left:0;top:0" width="1040" height="720"><path d="M993.0 341.8 L993.0 334.2 L993.7 339.6 L994.4 327.1 L995.1 339.6 L995.8 330.9 L996.5 340.2 L997.2 331.5 L997.9 332.9 L998.6 335.6 L999.3 334.1 L1000.0 331.7 L1000.7 333.5 L1001.4 329.6 L1002.1 339.4 L1002.1 341.8 Z" fill="#f6b256"/></svg>
<svg class="a" style="left:0;top:0" width="1040" height="720"><path d="M1028.0 341.8 L1028.0 324.8 L1028.7 336.2 L1029.4 335.8 L1030.1 341.5 L1030.8 329.9 L1031.5 336.6 L1031.5 341.8 Z" fill="#f6b256"/></svg>
<div class="t" style="right:433px;top:312.1px;font-size:14px;color:#606468">0.21<span style="font-size:11.3px;color:#8a8e94;margin-left:6px;position:relative;top:-0.5px">s (0, auto)</span></div>
<div class="a" style="left:298px;top:342.8px;width:14px;height:36.6px;background:#f8c99b"></div>
<div class="a" style="left:312px;top:342.8px;width:2px;height:36.6px;background:#b3de8e"></div>
<div class="a" style="left:314px;top:342.8px;width:18px;height:36.6px;background:#75c070"></div>
<div class="a" style="left:332px;top:342.8px;width:3px;height:36.6px;background:#b3de8e"></div>
<div class="a" style="left:335px;top:342.8px;width:2px;height:36.6px;background:#75c070"></div>
<div class="a" style="left:337px;top:342.8px;width:4px;height:36.6px;background:#b3de8e"></div>
<div class="a" style="left:341px;top:342.8px;width:1px;height:36.6px;background:#75c070"></div>
<div class="a" style="left:342px;top:342.8px;width:2px;height:36.6px;background:#b3de8e"></div>
<div class="a" style="left:344px;top:342.8px;width:16px;height:36.6px;background:#75c070"></div>
<div class="a" style="left:360px;top:342.8px;width:4px;height:36.6px;background:#b3de8e"></div>
<div class="a" style="left:364px;top:342.8px;width:11px;height:36.6px;background:#75c070"></div>
<div class="a" style="left:375px;top:342.8px;width:4px;height:36.6px;background:#b3de8e"></div>
<div class="a" style="left:379px;top:342.8px;width:7px;height:36.6px;background:#75c070"></div>
<div class="a" style="left:386px;top:342.8px;width:4px;height:36.6px;background:#b3de8e"></div>
<div class="a" style="left:390px;top:342.8px;width:1px;height:36.6px;background:#75c070"></div>
<div class="a" style="left:391px;top:342.8px;width:4px;height:36.6px;background:#b3de8e"></div>
<div class="a" style="left:395px;top:342.8px;width:10px;height:36.6px;background:#75c070"></div>
<div class="a" style="left:405px;top:342.8px;width:1px;height:36.6px;background:#b3de8e"></div>
<div class="a" style="left:406px;top:342.8px;width:556px;height:36.6px;background:#75c070"></div>
<div class="a" style="left:962px;top:342.8px;width:7px;height:36.6px;background:#d1d4d8"></div>
<div class="a" style="left:969px;top:342.8px;width:26px;height:36.6px;background:#75c070"></div>
<div class="a" style="left:995px;top:342.8px;width:8px;height:36.6px;background:#d1d4d8"></div>
<div class="a" style="left:1003px;top:342.8px;width:25px;height:36.6px;background:#75c070"></div>
<div class="a" style="left:1028px;top:342.8px;width:3px;height:36.6px;background:#d1d4d8"></div>
<div class="a" style="left:1031px;top:342.8px;width:9px;height:36.6px;background:#75c070"></div>
<div class="st" style="left:306px;top:349.4px">..</div>
<div class="st" style="left:322px;top:349.4px">...</div>
<div class="st" style="left:413px;top:349.4px">..</div>
<div class="st" style="left:437px;top:349.4px">авто работает</div>
<div class="st" style="left:977px;top:349.4px">ав...</div>
<div class="st" style="left:1010px;top:349.4px">ав...</div>
<div class="a" style="left:351.0px;top:342.8px;width:1px;height:36.6px;background:rgba(255,255,255,.4)"></div>
<div class="a" style="left:366.0px;top:342.8px;width:1px;height:36.6px;background:rgba(255,255,255,.4)"></div>
<div class="a" style="left:372.0px;top:342.8px;width:1px;height:36.6px;background:rgba(255,255,255,.4)"></div>
<div class="a" style="left:395.5px;top:342.8px;width:1px;height:36.6px;background:rgba(255,255,255,.4)"></div>
<div class="a" style="left:419.5px;top:342.8px;width:1px;height:36.6px;background:rgba(255,255,255,.4)"></div>
<div class="a" style="left:429.5px;top:342.8px;width:1px;height:36.6px;background:rgba(255,255,255,.4)"></div>
<div class="a" style="left:298px;top:380.9px;width:14px;height:36.6px;background:#f8c99b"></div>
<div class="a" style="left:312px;top:380.9px;width:559px;height:36.6px;background:#75c070"></div>
<div class="a" style="left:871px;top:380.9px;width:18px;height:36.6px;background:#b3de8e"></div>
<div class="a" style="left:889px;top:380.9px;width:17px;height:36.6px;background:#d1d4d8"></div>
<div class="a" style="left:906px;top:380.9px;width:21px;height:36.6px;background:#75c070"></div>
<div class="a" style="left:927px;top:380.9px;width:11px;height:36.6px;background:#d1d4d8"></div>
<div class="a" style="left:938px;top:380.9px;width:24px;height:36.6px;background:#75c070"></div>
<div class="a" style="left:962px;top:380.9px;width:7px;height:36.6px;background:#d1d4d8"></div>
<div class="a" style="left:969px;top:380.9px;width:26px;height:36.6px;background:#75c070"></div>
<div class="a" style="left:995px;top:380.9px;width:8px;height:36.6px;background:#d1d4d8"></div>
<div class="a" style="left:1003px;top:380.9px;width:25px;height:36.6px;background:#75c070"></div>
<div class="a" style="left:1028px;top:380.9px;width:3px;height:36.6px;background:#d1d4d8"></div>
<div class="a" style="left:1031px;top:380.9px;width:9px;height:36.6px;background:#75c070"></div>
<div class="st" style="left:306px;top:387.5px">..</div>
<div class="st" style="left:320px;top:387.5px">авто ра...</div>
<div class="st" style="left:381px;top:387.5px">авто р...</div>
<div class="st" style="left:437px;top:387.5px">авто работает</div>
<div class="st" style="left:880px;top:387.5px">...</div>
<div class="st" style="left:896px;top:387.5px">...</div>
<div class="st" style="left:914px;top:387.5px">а...</div>
<div class="st" style="left:945px;top:387.5px">а...</div>
<div class="st" style="left:977px;top:387.5px">ав...</div>
<div class="st" style="left:1010px;top:387.5px">ав...</div>
<div class="a" style="left:363.5px;top:380.9px;width:1px;height:36.6px;background:rgba(255,255,255,.4)"></div>
<div class="a" style="left:372.0px;top:380.9px;width:1px;height:36.6px;background:rgba(255,255,255,.4)"></div>
<div class="a" style="left:419.4px;top:380.9px;width:1px;height:36.6px;background:rgba(255,255,255,.4)"></div>
<div class="a" style="left:429.4px;top:380.9px;width:1px;height:36.6px;background:rgba(255,255,255,.4)"></div>
<svg class="a" style="left:0;top:0" width="1040" height="720"><path d="M298.0 456.9 L298.0 434.8 L304.0 436.2 L310.5 437.9 L310.6 456.9 L310.6 456.9 Z" fill="#c8aed6"/></svg>
<svg class="a" style="left:0;top:0" width="1040" height="720"><path d="M316.5 456.9 L316.5 456.9 L316.9 456.1 L317.5 456.0 L317.7 455.4 L319.5 455.4 L319.7 456.0 L320.3 456.1 L320.7 456.9 L320.7 456.9 Z" fill="#c8aed6"/></svg>
<svg class="a" style="left:0;top:0" width="1040" height="720"><path d="M325.0 456.9 L325.0 456.9 L325.4 454.7 L326.0 454.5 L326.2 452.9 L328.0 452.9 L328.2 454.5 L328.8 454.9 L329.2 456.9 L329.2 456.9 Z" fill="#c8aed6"/></svg>
<svg class="a" style="left:0;top:0" width="1040" height="720"><path d="M334.0 456.9 L334.0 456.9 L334.4 454.4 L335.0 454.2 L335.2 452.4 L337.0 452.4 L337.2 454.2 L337.8 454.6 L338.2 456.9 L338.2 456.9 Z" fill="#c8aed6"/></svg>
<svg class="a" style="left:0;top:0" width="1040" height="720"><path d="M344.0 456.9 L344.0 456.9 L344.4 456.1 L345.0 456.0 L345.2 455.4 L347.0 455.4 L347.2 456.0 L347.8 456.1 L348.2 456.9 L348.2 456.9 Z" fill="#c8aed6"/></svg>
<svg class="a" style="left:0;top:0" width="1040" height="720"><path d="M352.5 456.9 L352.5 456.9 L352.9 454.7 L353.5 454.5 L353.7 452.9 L355.5 452.9 L355.7 454.5 L356.3 454.9 L356.7 456.9 L356.7 456.9 Z" fill="#c8aed6"/></svg>
<svg class="a" style="left:0;top:0" width="1040" height="720"><path d="M361.5 456.9 L361.5 456.9 L361.9 453.9 L362.5 453.6 L362.7 451.4 L364.5 451.4 L364.7 453.6 L365.3 454.1 L365.7 456.9 L365.7 456.9 Z" fill="#c8aed6"/></svg>
<svg class="a" style="left:0;top:0" width="1040" height="720"><path d="M371.0 456.9 L371.0 456.9 L371.4 453.6 L372.0 453.3 L372.2 450.9 L374.0 450.9 L374.2 453.3 L374.8 453.9 L375.2 456.9 L375.2 456.9 Z" fill="#c8aed6"/></svg>
<svg class="a" style="left:0;top:0" width="1040" height="720"><path d="M379.5 456.9 L379.5 456.9 L379.9 455.0 L380.5 454.8 L380.7 453.4 L382.5 453.4 L382.7 454.8 L383.3 455.1 L383.7 456.9 L383.7 456.9 Z" fill="#c8aed6"/></svg>
<svg class="a" style="left:0;top:0" width="1040" height="720"><path d="M389.5 456.9 L389.5 456.9 L389.9 456.1 L390.5 456.0 L390.7 455.4 L392.5 455.4 L392.7 456.0 L393.3 456.1 L393.7 456.9 L393.7 456.9 Z" fill="#c8aed6"/></svg>
<svg class="a" style="left:0;top:0" width="1040" height="720"><path d="M398.0 456.9 L398.0 456.9 L398.4 454.7 L399.0 454.5 L399.2 452.9 L401.0 452.9 L401.2 454.5 L401.8 454.9 L402.2 456.9 L402.2 456.9 Z" fill="#c8aed6"/></svg>
<svg class="a" style="left:0;top:0" width="1040" height="720"><path d="M406.5 456.9 L406.5 456.9 L406.9 454.7 L407.5 454.5 L407.7 452.9 L409.5 452.9 L409.7 454.5 L410.3 454.9 L410.7 456.9 L410.7 456.9 Z" fill="#c8aed6"/></svg>
<svg class="a" style="left:0;top:0" width="1040" height="720"><path d="M416.5 456.9 L416.5 456.9 L416.9 455.0 L417.5 454.8 L417.7 453.4 L419.5 453.4 L419.7 454.8 L420.3 455.1 L420.7 456.9 L420.7 456.9 Z" fill="#c8aed6"/></svg>
<svg class="a" style="left:0;top:0" width="1040" height="720"><path d="M427.0 456.9 L427.0 456.9 L427.4 454.1 L428.0 453.9 L428.2 451.9 L430.0 451.9 L430.2 453.9 L430.8 454.4 L431.2 456.9 L431.2 456.9 Z" fill="#c8aed6"/></svg>
<svg class="a" style="left:0;top:0" width="1040" height="720"><path d="M436.5 456.9 L436.5 456.9 L436.9 454.4 L437.5 454.2 L437.7 452.4 L439.5 452.4 L439.7 454.2 L440.3 454.6 L440.7 456.9 L440.7 456.9 Z" fill="#c8aed6"/></svg>
<svg class="a" style="left:0;top:0" width="1040" height="720"><path d="M446.0 456.9 L446.0 456.9 L446.4 454.7 L447.0 454.5 L447.2 452.9 L449.0 452.9 L449.2 454.5 L449.8 454.9 L450.2 456.9 L450.2 456.9 Z" fill="#c8aed6"/></svg>
<svg class="a" style="left:0;top:0" width="1040" height="720"><path d="M455.0 456.9 L455.0 456.9 L455.4 453.6 L456.0 453.3 L456.2 450.9 L458.0 450.9 L458.2 453.3 L458.8 453.9 L459.2 456.9 L459.2 456.9 Z" fill="#c8aed6"/></svg>
<svg class="a" style="left:0;top:0" width="1040" height="720"><path d="M465.5 456.9 L465.5 456.9 L465.9 456.2 L466.5 456.2 L466.7 455.7 L468.5 455.7 L468.7 456.2 L469.3 456.3 L469.7 456.9 L469.7 456.9 Z" fill="#c8aed6"/></svg>
<svg class="a" style="left:0;top:0" width="1040" height="720"><path d="M474.0 456.9 L474.0 456.9 L474.4 455.0 L475.0 454.8 L475.2 453.4 L477.0 453.4 L477.2 454.8 L477.8 455.1 L478.2 456.9 L478.2 456.9 Z" fill="#c8aed6"/></svg>
<svg class="a" style="left:0;top:0" width="1040" height="720"><path d="M485.5 456.9 L485.5 456.9 L485.9 456.2 L486.5 456.2 L486.7 455.7 L488.5 455.7 L488.7 456.2 L489.3 456.3 L489.7 456.9 L489.7 456.9 Z" fill="#c8aed6"/></svg>
<svg class="a" style="left:0;top:0" width="1040" height="720"><path d="M503.0 456.9 L503.0 456.9 L503.4 456.1 L504.0 456.0 L504.2 455.4 L506.0 455.4 L506.2 456.0 L506.8 456.1 L507.2 456.9 L507.2 456.9 Z" fill="#c8aed6"/></svg>
<svg class="a" style="left:0;top:0" width="1040" height="720"><path d="M523.5 456.9 L523.5 456.9 L523.9 455.0 L524.5 454.8 L524.7 453.4 L526.5 453.4 L526.7 454.8 L527.3 455.1 L527.7 456.9 L527.7 456.9 Z" fill="#c8aed6"/></svg>
<svg class="a" style="left:0;top:0" width="1040" height="720"><path d="M554.0 456.9 L554.0 456.9 L554.4 454.1 L555.0 453.9 L555.2 451.9 L557.0 451.9 L557.2 453.9 L557.8 454.4 L558.2 456.9 L558.2 456.9 Z" fill="#c8aed6"/></svg>
<svg class="a" style="left:0;top:0" width="1040" height="720"><path d="M563.5 456.9 L563.5 456.9 L563.9 454.7 L564.5 454.5 L564.7 452.9 L566.5 452.9 L566.7 454.5 L567.3 454.9 L567.7 456.9 L567.7 456.9 Z" fill="#c8aed6"/></svg>
<svg class="a" style="left:0;top:0" width="1040" height="720"><path d="M576.5 456.9 L576.5 456.9 L576.9 456.2 L577.5 456.2 L577.7 455.7 L579.5 455.7 L579.7 456.2 L580.3 456.3 L580.7 456.9 L580.7 456.9 Z" fill="#c8aed6"/></svg>
<svg class="a" style="left:0;top:0" width="1040" height="720"><path d="M645.0 456.9 L645.0 456.9 L645.4 454.3 L646.0 454.0 L646.2 452.1 L648.0 452.1 L648.2 454.0 L648.8 454.5 L649.2 456.9 L649.2 456.9 Z" fill="#c8aed6"/></svg>
<svg class="a" style="left:0;top:0" width="1040" height="720"><path d="M654.4 456.9 L654.4 456.9 L654.8 454.1 L655.4 453.9 L655.6 451.8 L657.4 451.8 L657.6 453.9 L658.2 454.4 L658.6 456.9 L658.6 456.9 Z" fill="#c8aed6"/></svg>
<svg class="a" style="left:0;top:0" width="1040" height="720"><path d="M663.7 456.9 L663.7 456.9 L664.1 453.6 L664.7 453.2 L664.9 450.8 L666.7 450.8 L666.9 453.2 L667.5 453.9 L667.9 456.9 L667.9 456.9 Z" fill="#c8aed6"/></svg>
<svg class="a" style="left:0;top:0" width="1040" height="720"><path d="M673.1 456.9 L673.1 456.9 L673.5 454.3 L674.1 454.0 L674.3 452.1 L676.1 452.1 L676.3 454.0 L676.9 454.5 L677.3 456.9 L677.3 456.9 Z" fill="#c8aed6"/></svg>
<svg class="a" style="left:0;top:0" width="1040" height="720"><path d="M682.4 456.9 L682.4 456.9 L682.8 454.2 L683.4 453.9 L683.6 452.0 L685.4 452.0 L685.6 453.9 L686.2 454.4 L686.6 456.9 L686.6 456.9 Z" fill="#c8aed6"/></svg>
<svg class="a" style="left:0;top:0" width="1040" height="720"><path d="M691.8 456.9 L691.8 456.9 L692.2 454.1 L692.8 453.8 L693.0 451.8 L694.8 451.8 L695.0 453.8 L695.6 454.3 L696.0 456.9 L696.0 456.9 Z" fill="#c8aed6"/></svg>
<svg class="a" style="left:0;top:0" width="1040" height="720"><path d="M701.1 456.9 L701.1 456.9 L701.5 454.7 L702.1 454.5 L702.3 452.9 L704.1 452.9 L704.3 454.5 L704.9 454.9 L705.3 456.9 L705.3 456.9 Z" fill="#c8aed6"/></svg>
<svg class="a" style="left:0;top:0" width="1040" height="720"><path d="M710.5 456.9 L710.5 456.9 L710.9 454.2 L711.5 453.9 L711.7 452.0 L713.5 452.0 L713.7 453.9 L714.3 454.4 L714.7 456.9 L714.7 456.9 Z" fill="#c8aed6"/></svg>
<svg class="a" style="left:0;top:0" width="1040" height="720"><path d="M719.8 456.9 L719.8 456.9 L720.2 454.0 L720.8 453.7 L721.0 451.6 L722.8 451.6 L723.0 453.7 L723.6 454.3 L724.0 456.9 L724.0 456.9 Z" fill="#c8aed6"/></svg>
<svg class="a" style="left:0;top:0" width="1040" height="720"><path d="M729.2 456.9 L729.2 456.9 L729.6 453.8 L730.2 453.5 L730.4 451.2 L732.2 451.2 L732.4 453.5 L733.0 454.0 L733.4 456.9 L733.4 456.9 Z" fill="#c8aed6"/></svg>
<svg class="a" style="left:0;top:0" width="1040" height="720"><path d="M738.5 456.9 L738.5 456.9 L738.9 454.8 L739.5 454.6 L739.7 453.1 L741.5 453.1 L741.7 454.6 L742.3 455.0 L742.7 456.9 L742.7 456.9 Z" fill="#c8aed6"/></svg>
<svg class="a" style="left:0;top:0" width="1040" height="720"><path d="M747.9 456.9 L747.9 456.9 L748.3 454.5 L748.9 454.3 L749.1 452.6 L750.9 452.6 L751.1 454.3 L751.7 454.7 L752.1 456.9 L752.1 456.9 Z" fill="#c8aed6"/></svg>
<svg class="a" style="left:0;top:0" width="1040" height="720"><path d="M757.2 456.9 L757.2 456.9 L757.6 454.8 L758.2 454.6 L758.4 453.1 L760.2 453.1 L760.4 454.6 L761.0 455.0 L761.4 456.9 L761.4 456.9 Z" fill="#c8aed6"/></svg>
<svg class="a" style="left:0;top:0" width="1040" height="720"><path d="M766.6 456.9 L766.6 456.9 L767.0 453.7 L767.6 453.4 L767.8 451.1 L769.6 451.1 L769.8 453.4 L770.4 454.0 L770.8 456.9 L770.8 456.9 Z" fill="#c8aed6"/></svg>
<svg class="a" style="left:0;top:0" width="1040" height="720"><path d="M775.9 456.9 L775.9 456.9 L776.3 453.9 L776.9 453.6 L777.1 451.5 L778.9 451.5 L779.1 453.6 L779.7 454.2 L780.1 456.9 L780.1 456.9 Z" fill="#c8aed6"/></svg>
<svg class="a" style="left:0;top:0" width="1040" height="720"><path d="M785.3 456.9 L785.3 456.9 L785.7 454.9 L786.3 454.7 L786.5 453.3 L788.3 453.3 L788.5 454.7 L789.1 455.1 L789.5 456.9 L789.5 456.9 Z" fill="#c8aed6"/></svg>
<svg class="a" style="left:0;top:0" width="1040" height="720"><path d="M794.6 456.9 L794.6 456.9 L795.0 453.5 L795.6 453.1 L795.8 450.6 L797.6 450.6 L797.8 453.1 L798.4 453.8 L798.8 456.9 L798.8 456.9 Z" fill="#c8aed6"/></svg>
<svg class="a" style="left:0;top:0" width="1040" height="720"><path d="M804.0 456.9 L804.0 456.9 L804.4 453.5 L805.0 453.2 L805.2 450.7 L807.0 450.7 L807.2 453.2 L807.8 453.8 L808.2 456.9 L808.2 456.9 Z" fill="#c8aed6"/></svg>
<svg class="a" style="left:0;top:0" width="1040" height="720"><path d="M813.3 456.9 L813.3 456.9 L813.7 454.0 L814.3 453.7 L814.5 451.6 L816.3 451.6 L816.5 453.7 L817.1 454.2 L817.5 456.9 L817.5 456.9 Z" fill="#c8aed6"/></svg>
<svg class="a" style="left:0;top:0" width="1040" height="720"><path d="M822.7 456.9 L822.7 456.9 L823.1 454.0 L823.7 453.8 L823.9 451.7 L825.7 451.7 L825.9 453.8 L826.5 454.3 L826.9 456.9 L826.9 456.9 Z" fill="#c8aed6"/></svg>
<svg class="a" style="left:0;top:0" width="1040" height="720"><path d="M832.0 456.9 L832.0 456.9 L832.4 454.7 L833.0 454.5 L833.2 453.0 L835.0 453.0 L835.2 454.5 L835.8 454.9 L836.2 456.9 L836.2 456.9 Z" fill="#c8aed6"/></svg>
<svg class="a" style="left:0;top:0" width="1040" height="720"><path d="M841.4 456.9 L841.4 456.9 L841.8 455.0 L842.4 454.8 L842.6 453.4 L844.4 453.4 L844.6 454.8 L845.2 455.1 L845.6 456.9 L845.6 456.9 Z" fill="#c8aed6"/></svg>
<svg class="a" style="left:0;top:0" width="1040" height="720"><path d="M850.7 456.9 L850.7 456.9 L851.1 454.2 L851.7 453.9 L851.9 451.9 L853.7 451.9 L853.9 453.9 L854.5 454.4 L854.9 456.9 L854.9 456.9 Z" fill="#c8aed6"/></svg>
<svg class="a" style="left:0;top:0" width="1040" height="720"><path d="M860.1 456.9 L860.1 456.9 L860.5 454.9 L861.1 454.7 L861.3 453.2 L863.1 453.2 L863.3 454.7 L863.9 455.1 L864.3 456.9 L864.3 456.9 Z" fill="#c8aed6"/></svg>
<svg class="a" style="left:0;top:0" width="1040" height="720"><path d="M869.4 456.9 L869.4 456.9 L869.8 454.7 L870.4 454.5 L870.6 452.9 L872.4 452.9 L872.6 454.5 L873.2 454.9 L873.6 456.9 L873.6 456.9 Z" fill="#c8aed6"/></svg>
<svg class="a" style="left:0;top:0" width="1040" height="720"><path d="M871.0 456.9 L871.0 456.9 L872.0 453.9 L873.5 451.9 L875.0 453.9 L877.0 452.9 L878.0 431.9 L879.0 424.9 L880.0 420.4 L884.0 419.9 L890.0 422.4 L905.0 426.9 L906.0 456.6 L906.2 456.9 L906.2 456.9 Z" fill="#c8aed6"/></svg>
<svg class="a" style="left:0;top:0" width="1040" height="720"><path d="M863.0 456.9 L863.0 456.9 L863.4 454.7 L864.0 454.5 L864.2 452.9 L865.3 452.9 L865.5 454.5 L866.1 454.9 L866.5 456.9 L866.5 456.9 Z" fill="#c8aed6"/></svg>
<svg class="a" style="left:0;top:0" width="1040" height="720"><path d="M912.0 456.9 L912.0 456.9 L912.4 454.1 L913.0 453.9 L913.2 451.9 L914.8 451.9 L915.0 453.9 L915.6 454.4 L916.0 456.9 L916.0 456.9 Z" fill="#c8aed6"/></svg>
<svg class="a" style="left:0;top:0" width="1040" height="720"><path d="M923.0 456.9 L923.0 456.9 L923.4 456.1 L924.0 456.0 L924.2 455.4 L924.8 455.4 L925.0 456.0 L925.6 456.1 L926.0 456.9 L926.0 456.9 Z" fill="#c8aed6"/></svg>
<svg class="a" style="left:0;top:0" width="1040" height="720"><path d="M928.0 456.9 L928.0 456.9 L928.4 454.7 L929.0 454.5 L929.2 452.9 L930.8 452.9 L931.0 454.5 L931.6 454.9 L932.0 456.9 L932.0 456.9 Z" fill="#c8aed6"/></svg>
<svg class="a" style="left:0;top:0" width="1040" height="720"><path d="M932.0 456.9 L932.0 456.9 L932.4 453.3 L933.0 453.0 L933.2 450.4 L935.8 450.4 L936.0 453.0 L936.6 453.6 L937.0 456.9 L937.0 456.9 Z" fill="#c8aed6"/></svg>
<svg class="a" style="left:0;top:0" width="1040" height="720"><path d="M940.0 456.9 L940.0 456.9 L940.4 453.9 L941.0 453.6 L941.2 451.4 L942.8 451.4 L943.0 453.6 L943.6 454.1 L944.0 456.9 L944.0 456.9 Z" fill="#c8aed6"/></svg>
<svg class="a" style="left:0;top:0" width="1040" height="720"><path d="M949.0 456.9 L949.0 456.9 L949.4 454.1 L950.0 453.9 L950.2 451.9 L951.8 451.9 L952.0 453.9 L952.6 454.4 L953.0 456.9 L953.0 456.9 Z" fill="#c8aed6"/></svg>
<svg class="a" style="left:0;top:0" width="1040" height="720"><path d="M958.0 456.9 L958.0 456.9 L958.4 454.4 L959.0 454.2 L959.2 452.4 L960.8 452.4 L961.0 454.2 L961.6 454.6 L962.0 456.9 L962.0 456.9 Z" fill="#c8aed6"/></svg>
<svg class="a" style="left:0;top:0" width="1040" height="720"><path d="M962.0 456.9 L962.0 456.9 L962.4 453.6 L963.0 453.3 L963.2 450.9 L966.8 450.9 L967.0 453.3 L967.6 453.9 L968.0 456.9 L968.0 456.9 Z" fill="#c8aed6"/></svg>
<svg class="a" style="left:0;top:0" width="1040" height="720"><path d="M974.0 456.9 L974.0 456.9 L974.4 454.1 L975.0 453.9 L975.2 451.9 L976.8 451.9 L977.0 453.9 L977.6 454.4 L978.0 456.9 L978.0 456.9 Z" fill="#c8aed6"/></svg>
<svg class="a" style="left:0;top:0" width="1040" height="720"><path d="M984.0 456.9 L984.0 456.9 L984.4 453.9 L985.0 453.6 L985.2 451.4 L986.8 451.4 L987.0 453.6 L987.6 454.1 L988.0 456.9 L988.0 456.9 Z" fill="#c8aed6"/></svg>
<svg class="a" style="left:0;top:0" width="1040" height="720"><path d="M992.0 456.9 L992.0 456.9 L992.4 454.4 L993.0 454.2 L993.2 452.4 L995.8 452.4 L996.0 454.2 L996.6 454.6 L997.0 456.9 L997.0 456.9 Z" fill="#c8aed6"/></svg>
<svg class="a" style="left:0;top:0" width="1040" height="720"><path d="M997.0 456.9 L997.0 456.9 L997.4 453.0 L998.0 452.7 L998.2 449.9 L1000.8 449.9 L1001.0 452.7 L1001.6 453.4 L1002.0 456.9 L1002.0 456.9 Z" fill="#c8aed6"/></svg>
<svg class="a" style="left:0;top:0" width="1040" height="720"><path d="M1009.0 456.9 L1009.0 456.9 L1009.4 453.6 L1010.0 453.3 L1010.2 450.9 L1011.8 450.9 L1012.0 453.3 L1012.6 453.9 L1013.0 456.9 L1013.0 456.9 Z" fill="#c8aed6"/></svg>
<svg class="a" style="left:0;top:0" width="1040" height="720"><path d="M1020.0 456.9 L1020.0 456.9 L1020.4 455.0 L1021.0 454.8 L1021.2 453.4 L1022.3 453.4 L1022.5 454.8 L1023.1 455.1 L1023.5 456.9 L1023.5 456.9 Z" fill="#c8aed6"/></svg>
<svg class="a" style="left:0;top:0" width="1040" height="720"><path d="M1031.0 456.9 L1031.0 456.9 L1031.4 455.0 L1032.0 454.8 L1032.2 453.4 L1033.3 453.4 L1033.5 454.8 L1034.1 455.1 L1034.5 456.9 L1034.5 456.9 Z" fill="#c8aed6"/></svg>
<div class="t" style="right:433px;top:425.9px;font-size:14px;color:#606468">-1.96<span style="font-size:11.3px;color:#8a8e94;margin-left:6px;position:relative;top:-0.5px">°C (0, auto)</span></div>
<div class="a" style="left:298px;top:457.2px;width:14px;height:36.6px;background:#b3de8e"></div>
<div class="a" style="left:312px;top:457.2px;width:559px;height:36.6px;background:#75c070"></div>
<div class="a" style="left:871px;top:457.2px;width:18px;height:36.6px;background:#b3de8e"></div>
<div class="a" style="left:889px;top:457.2px;width:17px;height:36.6px;background:#d1d4d8"></div>
<div class="a" style="left:906px;top:457.2px;width:56px;height:36.6px;background:#75c070"></div>
<div class="a" style="left:962px;top:457.2px;width:7px;height:36.6px;background:#d1d4d8"></div>
<div class="a" style="left:969px;top:457.2px;width:26px;height:36.6px;background:#75c070"></div>
<div class="a" style="left:995px;top:457.2px;width:8px;height:36.6px;background:#d1d4d8"></div>
<div class="a" style="left:1003px;top:457.2px;width:25px;height:36.6px;background:#75c070"></div>
<div class="a" style="left:1028px;top:457.2px;width:3px;height:36.6px;background:#d1d4d8"></div>
<div class="a" style="left:1031px;top:457.2px;width:9px;height:36.6px;background:#75c070"></div>
<div class="st" style="left:306px;top:463.8px">..</div>
<div class="st" style="left:320px;top:463.8px">авто от...</div>
<div class="st" style="left:381px;top:463.8px">авто о...</div>
<div class="st" style="left:437px;top:463.8px">авто открыт</div>
<div class="st" style="left:880px;top:463.8px">...</div>
<div class="st" style="left:896px;top:463.8px">...</div>
<div class="st" style="left:914px;top:463.8px">авто отк...</div>
<div class="st" style="left:977px;top:463.8px">ав...</div>
<div class="st" style="left:1010px;top:463.8px">ав...</div>
<div class="a" style="left:363.5px;top:457.2px;width:1px;height:36.6px;background:rgba(255,255,255,.4)"></div>
<div class="a" style="left:372.0px;top:457.2px;width:1px;height:36.6px;background:rgba(255,255,255,.4)"></div>
<div class="a" style="left:419.4px;top:457.2px;width:1px;height:36.6px;background:rgba(255,255,255,.4)"></div>
<div class="a" style="left:429.4px;top:457.2px;width:1px;height:36.6px;background:rgba(255,255,255,.4)"></div>
<svg class="a" style="left:0;top:0" width="1040" height="720"><path d="M311.0 532.5 L311.0 532.2 L311.0 499.9 L312.0 496.9 L313.0 497.0 L314.0 497.0 L315.0 496.9 L316.0 497.6 L317.0 497.4 L318.0 496.7 L319.0 496.7 L320.0 497.3 L321.0 497.4 L322.0 497.5 L323.0 496.3 L324.0 497.5 L325.0 497.6 L326.0 496.4 L327.0 497.3 L328.0 496.4 L329.0 497.6 L330.0 496.5 L331.0 496.4 L332.0 497.3 L333.0 497.0 L334.0 500.6 L335.0 496.5 L336.0 496.5 L337.0 496.6 L338.0 497.6 L339.0 496.7 L340.0 500.6 L341.0 497.4 L342.0 496.4 L343.0 496.6 L344.0 497.3 L345.0 496.7 L346.0 496.4 L347.0 496.6 L348.0 496.8 L349.0 497.6 L350.0 497.1 L351.0 496.6 L352.0 497.5 L353.0 496.6 L354.0 497.3 L355.0 496.6 L356.0 497.5 L357.0 496.9 L358.0 496.4 L359.0 496.6 L360.0 496.7 L361.0 497.1 L362.0 496.5 L363.0 496.4 L364.0 506.0 L365.0 503.1 L366.0 497.5 L367.0 496.3 L368.1 496.9 L369.1 496.5 L370.1 497.1 L371.1 496.8 L372.1 497.6 L373.1 501.2 L374.1 496.6 L375.1 497.5 L376.1 502.0 L377.1 497.0 L378.1 496.7 L379.1 496.4 L380.1 497.3 L381.1 497.3 L382.1 497.4 L383.1 496.8 L384.1 497.5 L385.1 496.9 L386.1 497.4 L387.1 497.1 L388.1 497.1 L389.1 496.4 L390.1 497.6 L391.1 497.3 L392.1 497.3 L393.1 496.9 L394.1 496.4 L395.1 496.4 L396.1 497.0 L397.1 497.2 L398.1 497.1 L399.1 498.8 L400.1 497.2 L401.1 496.6 L402.1 497.2 L403.1 497.5 L404.1 497.2 L405.1 500.9 L406.1 497.5 L407.1 496.8 L408.1 496.7 L409.1 497.0 L410.1 497.4 L411.1 497.6 L412.1 496.6 L413.1 496.7 L414.1 496.9 L415.1 497.0 L416.1 497.4 L417.1 496.9 L418.1 496.4 L419.1 496.4 L420.1 497.1 L421.1 498.3 L422.1 502.7 L423.1 496.6 L424.1 496.4 L425.1 496.9 L426.1 497.2 L427.1 497.6 L428.1 496.6 L429.1 504.9 L430.1 497.3 L431.1 496.7 L432.1 497.2 L433.1 497.1 L434.1 496.9 L435.1 497.5 L436.1 497.6 L437.1 496.5 L438.1 497.2 L439.1 496.8 L440.1 497.5 L441.1 497.6 L442.1 497.2 L443.1 497.3 L444.1 497.2 L445.1 496.6 L446.1 497.6 L447.1 497.0 L448.1 496.8 L449.1 497.5 L450.1 496.5 L451.1 497.1 L452.1 502.6 L453.1 496.4 L454.1 496.6 L455.1 497.4 L456.1 496.5 L457.1 497.3 L458.1 497.2 L459.1 497.0 L460.1 496.5 L461.1 497.0 L462.1 497.3 L463.1 497.0 L464.1 497.1 L465.1 496.9 L466.1 497.5 L467.1 497.5 L468.1 497.0 L469.1 496.6 L470.1 497.0 L471.1 496.4 L472.1 497.0 L473.1 497.4 L474.1 497.0 L475.1 496.4 L476.1 496.9 L477.1 497.6 L478.1 497.0 L479.1 496.9 L480.2 497.5 L481.2 496.8 L482.2 497.2 L483.2 496.5 L484.2 496.4 L485.2 496.7 L486.2 496.8 L487.2 497.2 L488.2 497.3 L489.2 497.0 L490.2 496.6 L491.2 496.9 L492.2 496.9 L493.2 496.6 L494.2 497.2 L495.2 497.1 L496.2 497.2 L497.2 496.7 L498.2 497.4 L499.2 496.8 L500.2 497.6 L501.2 497.7 L502.2 496.5 L503.2 500.3 L504.2 496.5 L505.2 496.9 L506.2 496.5 L507.2 498.7 L508.2 497.3 L509.2 497.6 L510.2 497.0 L511.2 497.0 L512.2 496.6 L513.2 500.4 L514.2 497.0 L515.2 496.6 L516.2 496.6 L517.2 497.7 L518.2 496.5 L519.2 497.6 L520.2 497.4 L521.2 497.0 L522.2 496.9 L523.2 496.4 L524.2 497.5 L525.2 497.0 L526.2 496.9 L527.2 496.6 L528.2 496.4 L529.2 497.4 L530.2 497.5 L531.2 496.9 L532.2 497.0 L533.2 497.4 L534.2 497.6 L535.2 497.4 L536.2 496.9 L537.2 497.5 L538.2 497.4 L539.2 496.9 L540.2 496.5 L541.2 499.5 L542.2 497.2 L543.2 496.7 L544.2 497.2 L545.2 497.2 L546.2 497.1 L547.2 497.7 L548.2 497.3 L549.2 502.0 L550.2 497.3 L551.2 496.9 L552.2 496.6 L553.2 496.5 L554.2 497.6 L555.2 497.0 L556.2 497.1 L557.2 497.2 L558.2 496.5 L559.2 503.9 L560.2 499.6 L561.2 496.6 L562.2 497.2 L563.2 497.6 L564.2 497.1 L565.2 496.9 L566.2 497.2 L567.2 496.8 L568.2 498.5 L569.2 496.4 L570.2 497.4 L571.2 497.6 L572.2 496.5 L573.2 497.6 L574.2 497.6 L575.2 497.0 L576.2 496.7 L577.2 497.6 L578.2 497.0 L579.2 497.5 L580.2 496.5 L581.2 497.0 L582.2 496.5 L583.2 496.6 L584.2 497.3 L585.2 496.7 L586.2 496.9 L587.2 497.1 L588.2 497.6 L589.2 496.7 L590.2 497.6 L591.2 497.2 L592.2 496.8 L593.3 497.1 L594.3 497.2 L595.3 496.6 L596.3 497.7 L597.3 498.0 L598.3 496.8 L599.3 497.2 L600.3 497.1 L601.3 496.5 L602.3 502.1 L603.3 496.9 L604.3 496.7 L605.3 497.4 L606.3 496.5 L607.3 497.5 L608.3 497.4 L609.3 497.0 L610.3 497.5 L611.3 497.3 L612.3 496.8 L613.3 497.4 L614.3 497.0 L615.3 496.5 L616.3 496.5 L617.3 497.1 L618.3 497.3 L619.3 497.4 L620.3 496.7 L621.3 496.5 L622.3 497.4 L623.3 496.8 L624.3 496.9 L625.3 496.9 L626.3 497.3 L627.3 497.6 L628.3 497.6 L629.3 497.5 L630.3 496.8 L631.3 497.6 L632.3 496.7 L633.3 496.9 L634.3 496.9 L635.3 496.7 L636.3 497.5 L637.3 497.5 L638.3 496.6 L639.3 497.6 L640.3 496.4 L641.3 497.1 L642.3 497.7 L643.3 497.5 L644.3 497.1 L645.3 496.5 L646.3 497.4 L647.3 496.5 L648.3 496.6 L649.3 497.3 L650.3 496.7 L651.3 497.1 L652.3 496.9 L653.3 497.7 L654.3 497.1 L655.3 497.4 L656.3 497.6 L657.3 497.5 L658.3 497.5 L659.3 497.5 L660.3 497.7 L661.3 497.1 L662.3 497.5 L663.3 497.0 L664.3 497.4 L665.3 496.9 L666.3 496.7 L667.3 496.8 L668.3 496.5 L669.3 496.6 L670.3 497.4 L671.3 496.5 L672.3 497.2 L673.3 496.5 L674.3 496.7 L675.3 496.7 L676.3 497.2 L677.3 496.7 L678.3 496.7 L679.3 496.8 L680.3 497.5 L681.3 496.8 L682.3 497.6 L683.3 497.1 L684.3 497.1 L685.3 496.5 L686.3 497.5 L687.3 497.1 L688.3 496.8 L689.3 497.3 L690.3 496.4 L691.3 496.9 L692.3 497.4 L693.3 496.6 L694.3 496.9 L695.3 497.6 L696.3 497.3 L697.3 496.8 L698.3 496.6 L699.3 496.4 L700.3 497.5 L701.3 496.5 L702.3 497.4 L703.3 497.1 L704.3 497.7 L705.4 497.6 L706.4 497.5 L707.4 497.6 L708.4 497.5 L709.4 497.1 L710.4 496.6 L711.4 496.8 L712.4 496.5 L713.4 497.1 L714.4 496.9 L715.4 496.6 L716.4 497.0 L717.4 497.5 L718.4 496.5 L719.4 497.4 L720.4 501.2 L721.4 496.5 L722.4 497.5 L723.4 503.2 L724.4 496.9 L725.4 496.8 L726.4 497.0 L727.4 496.8 L728.4 497.4 L729.4 497.7 L730.4 497.4 L731.4 497.5 L732.4 496.6 L733.4 497.3 L734.4 496.7 L735.4 497.5 L736.4 496.6 L737.4 496.7 L738.4 497.0 L739.4 497.6 L740.4 497.1 L741.4 497.4 L742.4 497.0 L743.4 499.8 L744.4 497.4 L745.4 497.5 L746.4 499.6 L747.4 496.9 L748.4 496.6 L749.4 497.1 L750.4 497.5 L751.4 496.7 L752.4 497.6 L753.4 496.9 L754.4 496.6 L755.4 497.7 L756.4 497.4 L757.4 496.7 L758.4 497.3 L759.4 496.6 L760.4 497.2 L761.4 496.9 L762.4 496.9 L763.4 496.6 L764.4 496.6 L765.4 497.2 L766.4 497.2 L767.4 497.6 L768.4 497.5 L769.4 496.6 L770.4 496.8 L771.4 496.8 L772.4 497.5 L773.4 497.2 L774.4 503.5 L775.4 504.7 L776.4 497.3 L777.4 497.3 L778.4 497.0 L779.4 498.9 L780.4 497.1 L781.4 497.0 L782.4 496.7 L783.4 496.8 L784.4 496.9 L785.4 496.5 L786.4 496.7 L787.4 497.2 L788.4 497.0 L789.4 497.4 L790.4 497.4 L791.4 497.8 L792.4 497.6 L793.4 497.0 L794.4 497.6 L795.4 497.2 L796.4 497.6 L797.4 496.5 L798.4 497.6 L799.4 497.3 L800.4 496.9 L801.4 496.6 L802.4 497.1 L803.4 497.0 L804.4 497.4 L805.4 496.8 L806.4 497.0 L807.4 496.6 L808.4 497.7 L809.4 497.6 L810.4 497.5 L811.4 497.4 L812.4 497.7 L813.4 497.5 L814.4 497.2 L815.4 496.5 L816.4 496.9 L817.5 496.6 L818.5 497.5 L819.5 496.9 L820.5 502.8 L821.5 496.9 L822.5 497.7 L823.5 497.1 L824.5 496.9 L825.5 497.6 L826.5 497.6 L827.5 497.1 L828.5 497.6 L829.5 496.7 L830.5 496.7 L831.5 496.6 L832.5 497.4 L833.5 497.7 L834.5 497.4 L835.5 497.4 L836.5 497.1 L837.5 496.8 L838.5 497.4 L839.5 499.7 L840.5 500.4 L841.5 497.0 L842.5 497.6 L843.5 496.8 L844.5 497.7 L845.5 496.8 L846.5 496.6 L847.5 497.1 L848.5 501.4 L849.5 496.9 L850.5 497.5 L851.5 496.9 L852.5 496.8 L853.5 497.2 L854.5 497.7 L855.5 496.5 L856.5 497.5 L857.5 497.7 L858.5 496.7 L859.5 497.3 L860.5 497.4 L861.5 497.2 L862.5 497.6 L863.5 497.2 L864.5 496.7 L865.5 496.7 L866.5 496.8 L867.5 497.5 L868.5 497.5 L869.5 497.1 L870.5 497.3 L871.5 496.5 L872.5 497.4 L873.5 497.6 L874.0 522.7 L875.0 505.6 L876.0 505.3 L877.0 512.1 L878.0 512.7 L879.0 513.0 L879.5 520.2 L880.2 517.1 L881.0 514.8 L882.0 514.3 L883.0 514.1 L884.0 514.2 L885.0 514.2 L886.0 515.1 L887.0 514.1 L887.8 516.5 L888.5 522.7 L889.0 532.2 L890.0 532.2 L891.0 532.2 L892.0 532.2 L893.0 532.2 L894.0 532.2 L895.0 532.2 L896.0 532.2 L897.0 532.2 L898.0 532.2 L899.0 532.2 L900.0 532.2 L901.0 532.2 L902.0 532.2 L903.0 532.2 L904.0 532.2 L904.5 515.0 L905.2 508.7 L906.0 505.7 L907.0 503.7 L908.0 502.5 L909.0 502.1 L910.0 501.0 L911.0 502.0 L912.0 501.3 L913.0 501.7 L914.0 501.6 L915.0 501.5 L916.0 502.3 L917.0 501.1 L918.0 501.8 L919.0 501.4 L920.0 502.1 L921.0 502.2 L922.0 501.5 L923.0 501.5 L924.0 501.3 L925.0 501.2 L926.0 512.2 L926.7 522.8 L927.7 522.9 L928.7 523.8 L929.6 523.6 L930.6 523.0 L931.6 523.4 L932.6 524.1 L933.6 522.8 L934.5 523.7 L935.5 522.8 L936.5 522.7 L937.2 514.5 L938.5 500.9 L939.5 500.1 L940.5 500.6 L941.6 501.3 L942.6 501.2 L943.6 500.3 L944.6 501.6 L945.7 503.3 L946.7 500.9 L947.7 500.6 L948.7 500.8 L949.8 501.4 L950.8 500.8 L951.8 501.5 L952.8 501.1 L953.8 501.0 L954.9 501.2 L955.9 505.2 L956.9 501.6 L957.9 502.1 L959.0 501.8 L960.0 501.2 L961.0 501.9 L962.0 511.9 L963.0 521.3 L964.0 521.2 L965.0 520.9 L966.0 521.4 L967.0 516.1 L968.0 511.0 L969.0 505.5 L970.0 500.3 L971.0 500.4 L972.0 500.2 L973.0 500.9 L974.0 503.6 L975.0 500.5 L976.0 500.5 L977.0 500.6 L978.0 500.6 L979.0 502.8 L980.0 501.2 L981.0 500.3 L982.0 500.2 L983.0 500.8 L984.0 500.5 L985.0 501.2 L986.0 500.8 L987.0 500.5 L988.0 500.4 L989.0 501.1 L990.0 502.1 L991.0 500.7 L992.0 500.5 L993.0 507.4 L994.0 514.6 L995.0 525.6 L996.0 522.0 L997.0 522.1 L998.0 522.2 L999.0 522.2 L1000.0 522.8 L1001.0 522.0 L1002.0 517.0 L1003.0 512.7 L1004.0 508.1 L1005.0 502.2 L1006.0 502.6 L1007.0 502.5 L1008.0 503.0 L1009.0 502.3 L1010.0 502.4 L1011.0 502.7 L1012.0 502.1 L1013.0 502.1 L1014.0 502.1 L1015.0 503.0 L1016.0 502.2 L1017.0 503.1 L1018.0 502.3 L1019.0 503.0 L1020.0 502.9 L1021.0 502.9 L1022.0 502.4 L1023.0 503.1 L1024.0 502.7 L1025.0 502.9 L1026.0 503.1 L1027.0 502.2 L1028.0 510.2 L1029.0 521.0 L1030.0 525.2 L1031.0 497.2 L1032.0 497.5 L1033.0 497.5 L1034.0 503.3 L1035.0 499.2 L1036.0 498.0 L1037.0 497.2 L1038.0 497.0 L1039.0 497.6 L1040.0 497.0 L1040.0 532.5 Z" fill="#d1d4d8"/></svg>
<div class="t" style="right:433px;top:502.5px;font-size:14px;color:#606468">0.51<span style="font-size:11.3px;color:#8a8e94;margin-left:6px;position:relative;top:-0.5px">bar (0, auto)</span></div>
<svg class="a" style="left:0;top:0" width="1040" height="720"><path d="M311.0 570.7 L311.0 570.4 L311.0 538.0 L312.0 538.8 L313.0 538.1 L314.0 538.7 L315.0 538.1 L316.0 538.4 L317.0 537.7 L318.0 537.7 L319.0 537.9 L320.0 537.7 L321.0 537.5 L322.0 537.7 L323.0 537.9 L324.0 538.3 L325.0 537.9 L326.0 537.6 L327.0 538.0 L328.0 537.8 L329.0 539.1 L330.0 538.9 L331.0 538.2 L332.0 538.1 L333.0 535.4 L334.0 538.5 L335.0 545.0 L336.0 539.1 L337.0 538.8 L338.0 539.3 L339.0 537.7 L340.0 544.1 L341.0 535.0 L342.0 537.5 L343.0 543.8 L344.0 538.8 L345.0 538.7 L346.0 538.8 L347.0 538.7 L348.0 537.7 L349.0 538.1 L350.0 537.9 L351.0 537.5 L352.0 537.9 L353.0 538.1 L354.0 538.8 L355.0 538.5 L356.0 537.9 L357.0 538.0 L358.0 538.0 L359.0 537.8 L360.0 538.4 L361.0 537.8 L362.0 537.7 L363.0 542.7 L364.0 550.1 L365.0 546.4 L366.0 533.8 L367.0 538.0 L368.0 537.7 L369.0 538.2 L370.0 537.9 L371.0 538.6 L372.0 537.9 L373.0 545.0 L374.0 537.8 L375.0 539.1 L376.0 538.5 L377.0 538.5 L378.0 538.5 L379.0 538.9 L380.0 538.3 L381.0 537.7 L382.0 538.6 L383.0 538.6 L384.0 538.1 L385.0 538.5 L386.0 544.0 L387.0 538.2 L388.0 538.5 L389.0 537.7 L390.0 539.1 L391.0 538.0 L392.0 539.1 L393.0 538.9 L394.0 539.1 L395.0 537.9 L396.0 538.5 L397.0 538.8 L398.0 538.3 L399.0 537.6 L400.0 538.6 L401.0 538.8 L402.0 538.4 L403.0 537.8 L404.0 538.5 L405.0 544.4 L406.0 538.3 L407.0 538.8 L408.0 538.7 L409.0 538.9 L410.0 537.7 L411.0 540.8 L412.0 538.9 L413.0 537.7 L414.0 538.1 L415.0 538.5 L416.0 537.6 L417.0 537.8 L418.0 538.9 L419.0 537.8 L420.0 541.2 L421.0 538.0 L422.0 537.9 L423.0 538.6 L424.0 537.7 L425.0 538.2 L426.0 537.7 L427.0 538.5 L428.0 537.8 L429.0 547.6 L430.0 538.1 L431.0 538.2 L432.0 538.5 L433.0 538.8 L434.0 538.2 L435.0 539.0 L436.0 538.6 L437.0 538.4 L438.0 538.9 L439.0 538.9 L440.0 538.2 L441.0 538.1 L442.0 538.5 L443.0 537.6 L444.0 538.0 L445.0 539.0 L446.0 538.6 L447.0 537.9 L448.0 537.7 L449.0 537.9 L450.0 538.0 L451.0 538.9 L452.0 538.4 L453.0 538.9 L454.0 538.1 L455.0 538.7 L456.0 538.1 L457.0 544.7 L458.0 538.3 L459.0 538.2 L460.0 538.6 L461.0 539.1 L462.0 539.1 L463.0 538.8 L464.0 538.6 L465.0 537.6 L466.0 538.1 L467.0 537.8 L468.0 537.8 L469.0 537.7 L470.0 538.7 L471.0 537.8 L472.0 538.5 L473.0 537.9 L474.0 538.7 L475.0 537.7 L476.0 537.5 L477.0 539.0 L478.0 537.5 L479.0 538.4 L480.0 537.7 L481.0 538.0 L482.0 537.7 L483.0 537.7 L484.0 538.3 L485.0 538.7 L486.0 538.2 L487.0 537.8 L488.0 538.4 L489.0 538.9 L490.0 538.9 L491.0 539.1 L492.0 538.2 L493.0 538.9 L494.0 539.5 L495.0 538.8 L496.0 538.6 L497.0 539.3 L498.0 538.0 L499.0 538.5 L500.0 537.6 L501.0 537.6 L502.0 537.7 L503.0 542.0 L504.0 538.5 L505.0 539.0 L506.0 538.3 L507.0 538.1 L508.0 538.7 L509.0 538.1 L510.0 538.3 L511.0 538.2 L512.0 537.6 L513.0 537.6 L514.0 538.4 L515.0 537.9 L516.0 538.1 L517.0 538.3 L518.0 538.7 L519.0 537.5 L520.0 544.4 L521.0 539.0 L522.0 538.5 L523.0 538.0 L524.0 538.4 L525.0 538.3 L526.0 538.7 L527.0 537.6 L528.0 537.9 L529.0 538.2 L530.0 538.1 L531.0 538.6 L532.0 539.1 L533.0 538.0 L534.0 538.8 L535.0 538.5 L536.0 544.3 L537.0 538.4 L538.0 546.9 L539.0 538.7 L540.0 537.5 L541.0 538.2 L542.0 539.1 L543.0 537.6 L544.0 538.2 L545.0 538.1 L546.0 538.2 L547.0 538.0 L548.0 537.6 L549.0 538.8 L550.0 538.4 L551.0 537.7 L552.0 539.0 L553.0 539.0 L554.0 538.2 L555.0 538.8 L556.0 538.9 L557.0 537.6 L558.0 538.1 L559.0 539.0 L560.0 542.6 L561.0 538.7 L562.0 538.7 L563.0 538.4 L564.0 538.1 L565.0 538.1 L566.0 538.3 L567.0 538.4 L568.0 538.1 L569.0 538.3 L570.0 538.0 L571.0 537.9 L572.0 538.7 L573.0 537.9 L574.0 538.8 L575.0 538.6 L576.0 538.5 L577.0 539.1 L578.0 538.2 L579.0 537.9 L580.0 537.7 L581.0 545.1 L582.0 538.4 L583.0 538.0 L584.0 539.0 L585.0 538.8 L586.0 538.8 L587.0 537.8 L588.0 538.5 L589.0 538.7 L590.0 538.9 L591.0 538.6 L592.0 539.0 L593.0 538.0 L594.0 538.7 L595.0 542.7 L596.0 537.9 L597.0 537.9 L598.0 538.3 L599.0 538.0 L600.0 538.3 L601.0 537.8 L602.0 545.9 L603.0 538.4 L604.0 538.4 L605.0 539.0 L606.0 537.9 L607.0 539.0 L608.0 538.8 L609.0 538.2 L610.0 538.7 L611.0 538.3 L612.0 538.1 L613.0 539.0 L614.0 539.0 L615.0 537.6 L616.0 537.7 L617.0 537.7 L618.0 538.0 L619.0 537.6 L620.0 542.7 L621.0 539.1 L622.0 538.9 L623.0 538.3 L624.0 538.3 L625.0 538.3 L626.0 538.3 L627.0 538.6 L628.0 538.3 L629.0 538.3 L630.0 539.1 L631.0 537.7 L632.0 538.0 L633.0 539.0 L634.0 539.0 L635.0 538.9 L636.0 537.5 L637.0 538.4 L638.0 538.5 L639.0 539.0 L640.0 538.3 L641.0 537.6 L642.0 538.9 L643.0 545.0 L644.0 538.6 L645.0 538.4 L646.0 539.4 L647.0 538.8 L648.0 538.8 L649.0 538.0 L650.0 537.5 L651.0 537.9 L652.0 538.3 L653.0 538.6 L654.0 537.9 L655.0 537.8 L656.0 537.9 L657.0 538.8 L658.0 537.9 L659.0 537.9 L660.0 537.9 L661.0 537.8 L662.0 538.0 L663.0 538.7 L664.0 538.8 L665.0 537.6 L666.0 537.9 L667.0 538.2 L668.0 538.1 L669.0 539.0 L670.0 538.1 L671.0 538.8 L672.0 538.0 L673.0 538.1 L674.0 538.4 L675.0 538.3 L676.0 537.5 L677.0 538.1 L678.0 539.0 L679.0 537.8 L680.0 539.0 L681.0 538.0 L682.0 537.7 L683.0 539.0 L684.0 537.7 L685.0 538.9 L686.0 539.0 L687.0 538.1 L688.0 537.9 L689.0 537.6 L690.0 540.8 L691.0 537.8 L692.0 538.3 L693.0 538.4 L694.0 538.3 L695.0 537.6 L696.0 537.6 L697.0 538.7 L698.0 538.3 L699.0 538.0 L700.0 538.0 L701.0 539.1 L702.0 538.5 L703.0 538.2 L704.0 539.0 L705.0 537.5 L706.0 538.1 L707.0 537.8 L708.0 538.7 L709.0 537.5 L710.0 538.8 L711.0 538.5 L712.0 540.5 L713.0 537.6 L714.0 538.5 L715.0 538.3 L716.0 538.0 L717.0 538.9 L718.0 544.2 L719.0 538.2 L720.0 539.0 L721.0 548.0 L722.0 538.9 L723.0 538.3 L724.0 544.0 L725.0 538.7 L726.0 538.4 L727.0 539.0 L728.0 537.7 L729.0 538.1 L730.0 538.3 L731.0 538.3 L732.0 537.5 L733.0 537.9 L734.0 538.5 L735.0 537.6 L736.0 538.3 L737.0 539.1 L738.0 538.2 L739.0 538.8 L740.0 538.8 L741.0 537.9 L742.0 538.3 L743.0 538.4 L744.0 538.3 L745.0 538.0 L746.0 538.3 L747.0 537.8 L748.0 538.8 L749.0 539.1 L750.0 538.6 L751.0 538.6 L752.0 538.8 L753.0 538.8 L754.0 537.9 L755.0 537.5 L756.0 538.0 L757.0 538.5 L758.0 539.0 L759.0 537.6 L760.0 537.7 L761.0 538.9 L762.0 537.8 L763.0 538.7 L764.0 538.5 L765.0 538.7 L766.0 538.9 L767.0 538.8 L768.0 538.4 L769.0 538.5 L770.0 538.1 L771.0 537.5 L772.0 538.8 L773.0 538.5 L774.0 538.6 L775.0 547.0 L776.0 537.8 L777.0 538.6 L778.0 538.0 L779.0 539.0 L780.0 539.0 L781.0 539.0 L782.0 538.0 L783.0 538.3 L784.0 537.6 L785.0 538.4 L786.0 538.7 L787.0 537.8 L788.0 537.9 L789.0 537.6 L790.0 538.1 L791.0 539.0 L792.0 538.2 L793.0 537.9 L794.0 539.0 L795.0 538.2 L796.0 538.7 L797.0 538.5 L798.0 538.9 L799.0 538.4 L800.0 538.3 L801.0 538.7 L802.0 537.7 L803.0 537.9 L804.0 538.7 L805.0 538.7 L806.0 538.6 L807.0 538.2 L808.0 538.3 L809.0 538.9 L810.0 537.6 L811.0 538.6 L812.0 537.7 L813.0 538.4 L814.0 538.1 L815.0 538.6 L816.0 537.6 L817.0 537.7 L818.0 538.9 L819.0 538.1 L820.0 537.7 L821.0 538.9 L822.0 538.4 L823.0 539.1 L824.0 538.0 L825.0 538.9 L826.0 538.2 L827.0 538.9 L828.0 538.8 L829.0 538.2 L830.0 538.2 L831.0 538.0 L832.0 538.2 L833.0 538.7 L834.0 538.3 L835.0 538.2 L836.0 538.9 L837.0 538.8 L838.0 538.6 L839.0 538.0 L840.0 539.0 L841.0 538.6 L842.0 538.5 L843.0 538.7 L844.0 539.1 L845.0 542.4 L846.0 538.7 L847.0 538.5 L848.0 538.1 L849.0 537.8 L850.0 537.6 L851.0 538.8 L852.0 538.1 L853.0 538.6 L854.0 538.7 L855.0 537.9 L856.0 538.4 L857.0 539.1 L858.0 538.7 L859.0 538.7 L860.0 537.9 L861.0 538.3 L862.0 537.8 L863.0 538.9 L864.0 538.0 L865.0 538.2 L866.0 538.5 L867.0 538.3 L868.0 538.4 L869.0 538.1 L870.0 537.6 L871.0 538.6 L872.0 538.8 L873.0 537.9 L874.0 541.7 L874.3 570.4 L875.0 570.4 L875.2 543.1 L875.8 542.5 L876.0 564.5 L877.0 563.3 L878.0 563.1 L878.2 570.4 L879.1 570.4 L880.1 570.4 L881.0 570.4 L881.2 562.2 L882.2 561.8 L883.1 561.0 L884.1 562.4 L885.1 562.1 L886.1 561.5 L887.0 561.3 L888.0 561.5 L888.2 570.4 L889.2 570.4 L890.2 570.4 L891.2 570.4 L892.2 570.4 L893.1 570.4 L894.1 570.4 L895.1 570.4 L896.1 570.4 L897.1 570.4 L898.1 570.4 L899.1 570.4 L900.0 570.4 L901.0 570.4 L902.0 570.4 L903.0 570.4 L904.0 570.4 L905.0 562.0 L906.0 552.0 L907.0 548.0 L908.0 545.3 L909.0 542.5 L910.0 544.2 L911.0 544.8 L912.0 544.6 L913.0 544.1 L914.0 543.8 L915.0 544.9 L916.0 544.1 L917.0 550.9 L918.0 543.6 L919.0 544.4 L920.0 546.8 L921.0 545.1 L922.0 544.9 L923.0 549.9 L924.0 543.8 L925.0 544.6 L926.0 558.5 L927.0 569.5 L928.0 569.6 L928.9 569.4 L929.9 570.7 L930.8 569.9 L931.8 569.2 L932.7 569.8 L933.6 569.5 L934.6 570.2 L935.5 570.1 L936.5 569.8 L937.5 552.6 L938.2 547.7 L939.0 542.9 L940.0 543.5 L941.0 542.3 L942.0 542.4 L943.0 543.4 L944.0 542.9 L945.0 544.0 L946.0 543.9 L947.0 543.6 L948.0 543.9 L949.0 544.7 L950.0 544.6 L951.0 543.8 L952.0 544.3 L953.0 544.1 L954.0 544.5 L955.0 543.9 L956.0 544.0 L957.0 544.7 L958.0 544.3 L959.0 545.8 L960.0 545.6 L961.0 545.4 L962.0 558.2 L963.0 570.4 L964.0 570.4 L965.0 570.4 L966.0 570.4 L967.0 566.1 L968.0 557.7 L969.0 549.5 L970.0 544.0 L971.0 542.1 L972.0 541.2 L973.0 541.7 L974.0 542.1 L975.0 542.2 L976.0 542.6 L977.0 542.5 L978.0 541.4 L979.0 541.6 L980.0 541.5 L981.0 542.3 L982.0 542.1 L983.0 542.9 L984.0 542.7 L985.0 548.2 L986.0 542.3 L987.0 542.2 L988.0 542.1 L989.0 543.4 L990.0 542.4 L991.0 543.0 L992.0 542.3 L993.0 551.5 L994.0 561.1 L995.0 570.1 L996.0 569.6 L997.0 569.8 L998.0 569.8 L999.0 570.1 L1000.0 570.6 L1001.0 569.5 L1002.0 563.7 L1003.0 556.8 L1004.0 551.0 L1005.0 544.9 L1006.0 544.3 L1007.0 544.1 L1008.0 544.1 L1009.0 544.7 L1010.0 545.0 L1011.0 545.2 L1012.0 544.1 L1013.0 544.2 L1014.0 552.0 L1015.0 544.6 L1016.0 544.1 L1017.0 545.0 L1018.0 544.1 L1019.0 544.5 L1020.0 544.2 L1021.0 545.0 L1022.0 544.3 L1023.0 544.6 L1024.0 544.9 L1025.0 544.6 L1026.0 544.1 L1027.0 544.3 L1028.0 557.2 L1029.0 570.4 L1030.0 570.4 L1031.0 540.9 L1032.0 540.9 L1033.0 540.2 L1034.0 541.1 L1035.0 541.1 L1036.0 540.1 L1037.0 540.5 L1038.0 541.3 L1039.0 541.5 L1040.0 540.0 L1040.0 570.7 Z" fill="#de7b68"/></svg>
<div class="t" style="right:433px;top:540.9px;font-size:14px;color:#505458">0.29<span style="font-size:11.3px;color:#7a7e84;margin-left:6px;position:relative;top:-0.5px">bar (0, auto)</span></div>
<div class="a" style="left:298px;top:571.6px;width:14px;height:36.6px;background:#f55656"></div>
<div class="a" style="left:312px;top:571.6px;width:564px;height:36.6px;background:#efcf87"></div>
<div class="a" style="left:876px;top:571.6px;width:30px;height:36.6px;background:#f55656"></div>
<div class="a" style="left:906px;top:571.6px;width:21px;height:36.6px;background:#efcf87"></div>
<div class="a" style="left:927px;top:571.6px;width:11px;height:36.6px;background:#f55656"></div>
<div class="a" style="left:938px;top:571.6px;width:24px;height:36.6px;background:#efcf87"></div>
<div class="a" style="left:962px;top:571.6px;width:7px;height:36.6px;background:#f55656"></div>
<div class="a" style="left:969px;top:571.6px;width:26px;height:36.6px;background:#efcf87"></div>
<div class="a" style="left:995px;top:571.6px;width:7px;height:36.6px;background:#f55656"></div>
<div class="a" style="left:1002px;top:571.6px;width:27px;height:36.6px;background:#efcf87"></div>
<div class="a" style="left:1029px;top:571.6px;width:2px;height:36.6px;background:#f55656"></div>
<div class="a" style="left:1031px;top:571.6px;width:9px;height:36.6px;background:#efcf87"></div>
<div class="st" style="left:306px;top:578.2px;letter-spacing:-0.54px">..</div>
<div class="st" style="left:320px;top:578.2px;letter-spacing:-0.54px">Sause T...</div>
<div class="st" style="left:381px;top:578.2px;letter-spacing:-0.54px">Sause ...</div>
<div class="st" style="left:437px;top:578.2px;letter-spacing:-0.54px">Sause Type: Cold</div>
<div class="st" style="left:884px;top:578.2px;letter-spacing:-0.54px">Sa...</div>
<div class="st" style="left:913px;top:578.2px;letter-spacing:-0.54px">...</div>
<div class="st" style="left:946px;top:578.2px;letter-spacing:-0.54px">S...</div>
<div class="st" style="left:976px;top:578.2px;letter-spacing:-0.54px">S...</div>
<div class="st" style="left:1010px;top:578.2px;letter-spacing:-0.54px">S...</div>
<div class="a" style="left:363.5px;top:571.6px;width:1px;height:36.6px;background:rgba(255,255,255,.4)"></div>
<div class="a" style="left:372.0px;top:571.6px;width:1px;height:36.6px;background:rgba(255,255,255,.4)"></div>
<div class="a" style="left:419.4px;top:571.6px;width:1px;height:36.6px;background:rgba(255,255,255,.4)"></div>
<div class="a" style="left:429.4px;top:571.6px;width:1px;height:36.6px;background:rgba(255,255,255,.4)"></div>
<div class="a" style="left:298px;top:609.8px;width:14px;height:36.6px;background:#f55656"></div>
<div class="a" style="left:312px;top:609.8px;width:563px;height:36.6px;background:#efcf87"></div>
<div class="a" style="left:875px;top:609.8px;width:1px;height:36.6px;background:#75c070"></div>
<div class="a" style="left:876px;top:609.8px;width:10px;height:36.6px;background:#efcf87"></div>
<div class="a" style="left:886px;top:609.8px;width:20px;height:36.6px;background:#f55656"></div>
<div class="a" style="left:906px;top:609.8px;width:2px;height:36.6px;background:#c98456"></div>
<div class="a" style="left:908px;top:609.8px;width:19px;height:36.6px;background:#efcf87"></div>
<div class="a" style="left:927px;top:609.8px;width:12px;height:36.6px;background:#c98456"></div>
<div class="a" style="left:939px;top:609.8px;width:23px;height:36.6px;background:#efcf87"></div>
<div class="a" style="left:962px;top:609.8px;width:7px;height:36.6px;background:#f55656"></div>
<div class="a" style="left:969px;top:609.8px;width:3px;height:36.6px;background:#e5a57a"></div>
<div class="a" style="left:972px;top:609.8px;width:23px;height:36.6px;background:#efcf87"></div>
<div class="a" style="left:995px;top:609.8px;width:8px;height:36.6px;background:#f55656"></div>
<div class="a" style="left:1003px;top:609.8px;width:3px;height:36.6px;background:#e8b07e"></div>
<div class="a" style="left:1006px;top:609.8px;width:22px;height:36.6px;background:#efcf87"></div>
<div class="a" style="left:1028px;top:609.8px;width:4px;height:36.6px;background:#d5735a"></div>
<div class="a" style="left:1032px;top:609.8px;width:8px;height:36.6px;background:#efcf87"></div>
<div class="st" style="left:306px;top:616.4px;letter-spacing:-0.54px">..</div>
<div class="st" style="left:320px;top:616.4px;letter-spacing:-0.54px">106: clo...</div>
<div class="st" style="left:381px;top:616.4px;letter-spacing:-0.54px">106: cl...</div>
<div class="st" style="left:437px;top:616.4px;letter-spacing:-0.54px">106: c...</div>
<div class="st" style="left:486.3px;top:616.4px;letter-spacing:-0.54px">1...</div>
<div class="st" style="left:524.8px;top:616.4px;letter-spacing:-0.54px">1...</div>
<div class="st" style="left:548px;top:616.4px;letter-spacing:-0.54px">1...</div>
<div class="st" style="left:577.7px;top:616.4px;letter-spacing:-0.54px">10...</div>
<div class="st" style="left:607.5px;top:616.4px;letter-spacing:-0.54px">106: closed 109: opened</div>
<div class="st" style="left:892px;top:616.4px;letter-spacing:-0.54px">1...</div>
<div class="st" style="left:918px;top:616.4px;letter-spacing:-0.54px">...</div>
<div class="st" style="left:934px;top:616.4px;letter-spacing:-0.54px">..</div>
<div class="st" style="left:985px;top:616.4px;letter-spacing:-0.54px">...</div>
<div class="st" style="left:1016px;top:616.4px;letter-spacing:-0.54px">...</div>
<div class="a" style="left:363.5px;top:609.8px;width:1px;height:36.6px;background:rgba(255,255,255,.4)"></div>
<div class="a" style="left:372.0px;top:609.8px;width:1px;height:36.6px;background:rgba(255,255,255,.4)"></div>
<div class="a" style="left:419.4px;top:609.8px;width:1px;height:36.6px;background:rgba(255,255,255,.4)"></div>
<div class="a" style="left:429.4px;top:609.8px;width:1px;height:36.6px;background:rgba(255,255,255,.4)"></div>
<div class="a" style="left:472.0px;top:609.8px;width:1px;height:36.6px;background:rgba(255,255,255,.4)"></div>
<div class="a" style="left:478.6px;top:609.8px;width:1px;height:36.6px;background:rgba(255,255,255,.4)"></div>
<div class="a" style="left:507.5px;top:609.8px;width:1px;height:36.6px;background:rgba(255,255,255,.4)"></div>
<div class="a" style="left:510.4px;top:609.8px;width:1px;height:36.6px;background:rgba(255,255,255,.4)"></div>
<div class="a" style="left:513.3px;top:609.8px;width:1px;height:36.6px;background:rgba(255,255,255,.4)"></div>
<div class="a" style="left:516.0px;top:609.8px;width:1px;height:36.6px;background:rgba(255,255,255,.4)"></div>
<div class="a" style="left:539.0px;top:609.8px;width:1px;height:36.6px;background:rgba(255,255,255,.4)"></div>
<div class="a" style="left:561.3px;top:609.8px;width:1px;height:36.6px;background:rgba(255,255,255,.4)"></div>
<div class="a" style="left:570.0px;top:609.8px;width:1px;height:36.6px;background:rgba(255,255,255,.4)"></div>
<div class="a" style="left:598.8px;top:609.8px;width:1px;height:36.6px;background:rgba(255,255,255,.4)"></div>
<div class="a" style="left:925.0px;top:609.8px;width:1px;height:36.6px;background:rgba(255,255,255,.4)"></div>
<div class="a" style="left:941.0px;top:609.8px;width:1px;height:36.6px;background:rgba(255,255,255,.4)"></div>
<div class="a" style="left:950.0px;top:609.8px;width:1px;height:36.6px;background:rgba(255,255,255,.4)"></div>
<div class="a" style="left:298px;top:647.9px;width:14px;height:36.6px;background:#f55656"></div>
<div class="a" style="left:312px;top:647.9px;width:564px;height:36.6px;background:#75c070"></div>
<div class="a" style="left:876px;top:647.9px;width:30px;height:36.6px;background:#f55656"></div>
<div class="a" style="left:906px;top:647.9px;width:21px;height:36.6px;background:#75c070"></div>
<div class="a" style="left:927px;top:647.9px;width:11px;height:36.6px;background:#f55656"></div>
<div class="a" style="left:938px;top:647.9px;width:24px;height:36.6px;background:#75c070"></div>
<div class="a" style="left:962px;top:647.9px;width:7px;height:36.6px;background:#f55656"></div>
<div class="a" style="left:969px;top:647.9px;width:26px;height:36.6px;background:#75c070"></div>
<div class="a" style="left:995px;top:647.9px;width:7px;height:36.6px;background:#f55656"></div>
<div class="a" style="left:1002px;top:647.9px;width:27px;height:36.6px;background:#75c070"></div>
<div class="a" style="left:1029px;top:647.9px;width:2px;height:36.6px;background:#f55656"></div>
<div class="a" style="left:1031px;top:647.9px;width:9px;height:36.6px;background:#75c070"></div>
<div class="st" style="left:306px;top:654.5px;letter-spacing:-0.54px">..</div>
<div class="st" style="left:320px;top:654.5px;letter-spacing:-0.54px">Cooling ...</div>
<div class="st" style="left:381px;top:654.5px;letter-spacing:-0.54px">Coolin...</div>
<div class="st" style="left:437px;top:654.5px;letter-spacing:-0.54px">Cooling Process Stage: Cooling</div>
<div class="st" style="left:884px;top:654.5px;letter-spacing:-0.54px">Co...</div>
<div class="st" style="left:914px;top:654.5px;letter-spacing:-0.54px">...</div>
<div class="st" style="left:946px;top:654.5px;letter-spacing:-0.54px">C...</div>
<div class="st" style="left:976px;top:654.5px;letter-spacing:-0.54px">C...</div>
<div class="st" style="left:1010px;top:654.5px;letter-spacing:-0.54px">C...</div>
<div class="a" style="left:363.5px;top:647.9px;width:1px;height:36.6px;background:rgba(255,255,255,.4)"></div>
<div class="a" style="left:372.0px;top:647.9px;width:1px;height:36.6px;background:rgba(255,255,255,.4)"></div>
<div class="a" style="left:419.4px;top:647.9px;width:1px;height:36.6px;background:rgba(255,255,255,.4)"></div>
<div class="a" style="left:429.4px;top:647.9px;width:1px;height:36.6px;background:rgba(255,255,255,.4)"></div>
<svg class="a" style="left:0;top:0" width="1040" height="720"><path d="M311.0 723.3 L311.0 719.1 L311.0 702.7 L312.0 702.8 L313.0 705.8 L314.0 705.7 L315.0 705.8 L316.0 705.8 L317.0 705.7 L318.0 705.8 L319.0 705.6 L320.0 705.5 L321.0 705.5 L322.0 705.6 L323.0 705.7 L324.0 705.6 L325.0 705.8 L326.0 705.6 L327.0 705.6 L328.0 705.6 L329.0 705.6 L330.0 705.5 L331.0 705.6 L332.0 705.7 L333.0 702.7 L334.0 702.6 L335.0 711.7 L336.0 702.6 L337.0 705.6 L338.0 702.7 L339.0 705.7 L340.0 711.7 L341.0 702.5 L342.0 705.5 L343.0 705.6 L344.0 705.7 L345.0 705.7 L346.0 705.5 L347.0 705.5 L348.0 705.7 L349.0 705.7 L350.0 705.6 L351.0 707.1 L352.0 703.5 L353.0 705.5 L354.0 705.5 L355.0 705.7 L356.0 705.5 L357.0 705.7 L358.0 705.6 L359.0 705.7 L360.0 702.8 L361.0 702.7 L362.0 708.5 L363.0 705.6 L364.0 713.6 L365.0 705.5 L366.0 705.7 L367.0 701.8 L368.0 705.6 L369.0 705.6 L370.0 705.6 L371.0 705.6 L372.0 705.6 L373.0 710.8 L374.0 705.6 L375.0 705.7 L376.0 701.5 L377.0 705.7 L378.0 705.6 L379.0 705.6 L380.0 710.9 L381.0 705.6 L382.0 705.5 L383.0 705.7 L384.0 705.7 L385.0 705.6 L386.0 702.5 L387.0 705.6 L388.0 705.7 L389.0 705.5 L390.0 705.6 L391.0 705.7 L392.0 705.5 L393.0 702.6 L394.0 705.7 L395.0 702.7 L396.0 705.7 L397.0 705.7 L398.0 705.7 L399.0 705.7 L400.0 705.6 L401.0 705.6 L402.0 705.7 L403.0 705.6 L404.0 705.5 L405.0 702.7 L406.0 709.6 L407.0 705.7 L408.0 705.5 L409.0 705.5 L410.0 705.6 L411.0 705.6 L412.0 705.5 L413.0 705.6 L414.0 705.7 L415.0 705.6 L416.0 705.6 L417.0 705.8 L418.0 705.7 L419.0 705.6 L420.0 705.7 L421.0 705.6 L422.0 705.7 L423.0 705.7 L424.0 705.7 L425.0 705.6 L426.0 705.7 L427.0 705.5 L428.0 705.5 L429.0 712.6 L430.0 705.5 L431.0 705.7 L432.0 705.7 L433.0 705.6 L434.0 705.5 L435.0 705.5 L436.0 705.5 L437.0 705.7 L438.0 705.5 L439.0 705.5 L440.0 708.4 L441.0 705.6 L442.0 705.5 L443.0 705.6 L444.0 705.6 L445.0 705.7 L446.0 705.5 L447.0 705.5 L448.0 705.5 L449.0 705.6 L450.0 705.7 L451.0 705.7 L452.0 705.7 L453.0 705.6 L454.0 705.6 L455.0 705.6 L456.0 705.6 L457.0 705.7 L458.0 709.7 L459.0 705.5 L460.0 705.5 L461.0 705.7 L462.0 705.6 L463.0 705.6 L464.0 705.7 L465.0 705.7 L466.0 705.4 L467.0 705.5 L468.0 705.5 L469.0 705.7 L470.0 705.6 L471.0 705.6 L472.0 705.6 L473.0 705.6 L474.0 705.5 L475.0 705.6 L476.0 705.4 L477.0 705.7 L478.0 705.5 L479.0 705.7 L480.0 705.7 L481.0 705.7 L482.0 705.5 L483.0 705.5 L484.0 705.7 L485.0 705.5 L486.0 705.5 L487.0 705.7 L488.0 705.6 L489.0 705.6 L490.0 705.6 L491.0 705.6 L492.0 705.6 L493.0 705.4 L494.0 705.5 L495.0 705.5 L496.0 705.7 L497.0 705.4 L498.0 705.5 L499.0 705.5 L500.0 705.7 L501.0 705.5 L502.0 705.4 L503.0 708.5 L504.0 705.7 L505.0 705.5 L506.0 705.7 L507.0 705.5 L508.0 705.5 L509.0 705.7 L510.0 705.7 L511.0 705.6 L512.0 705.7 L513.0 705.7 L514.0 705.7 L515.0 705.5 L516.0 705.7 L517.0 705.5 L518.0 705.7 L519.0 705.4 L520.0 705.5 L521.0 705.7 L522.0 705.7 L523.0 705.5 L524.0 705.5 L525.0 705.4 L526.0 705.5 L527.0 705.5 L528.0 709.6 L529.0 705.5 L530.0 705.5 L531.0 705.4 L532.0 705.5 L533.0 705.4 L534.0 705.4 L535.0 705.5 L536.0 706.2 L537.0 705.7 L538.0 705.6 L539.0 705.6 L540.0 705.7 L541.0 705.7 L542.0 705.6 L543.0 705.6 L544.0 705.6 L545.0 705.7 L546.0 705.6 L547.0 705.6 L548.0 705.4 L549.0 705.5 L550.0 705.5 L551.0 705.5 L552.0 705.6 L553.0 705.5 L554.0 705.4 L555.0 705.6 L556.0 705.6 L557.0 705.4 L558.0 705.6 L559.0 705.7 L560.0 709.4 L561.0 705.5 L562.0 705.7 L563.0 705.4 L564.0 705.5 L565.0 705.4 L566.0 705.5 L567.0 705.5 L568.0 705.7 L569.0 705.7 L570.0 705.5 L571.0 705.5 L572.0 705.6 L573.0 705.7 L574.0 705.4 L575.0 705.5 L576.0 705.7 L577.0 705.5 L578.0 705.6 L579.0 705.5 L580.0 705.7 L581.0 705.6 L582.0 705.6 L583.0 705.6 L584.0 705.6 L585.0 705.5 L586.0 705.4 L587.0 705.5 L588.0 705.7 L589.0 705.7 L590.0 705.7 L591.0 705.6 L592.0 705.6 L593.0 705.6 L594.0 705.4 L595.0 705.5 L596.0 705.7 L597.0 705.6 L598.0 705.6 L599.0 705.6 L600.0 705.7 L601.0 705.6 L602.0 711.5 L603.0 705.6 L604.0 707.8 L605.0 705.5 L606.0 705.5 L607.0 705.6 L608.0 710.8 L609.0 705.6 L610.0 705.6 L611.0 705.5 L612.0 705.6 L613.0 705.6 L614.0 705.6 L615.0 705.6 L616.0 705.6 L617.0 709.2 L618.0 705.6 L619.0 705.6 L620.0 705.4 L621.0 705.6 L622.0 705.6 L623.0 705.6 L624.0 705.5 L625.0 707.5 L626.0 705.5 L627.0 705.5 L628.0 705.6 L629.0 705.5 L630.0 705.4 L631.0 705.5 L632.0 705.5 L633.0 705.4 L634.0 707.3 L635.0 705.7 L636.0 705.5 L637.0 705.5 L638.0 705.4 L639.0 705.5 L640.0 705.6 L641.0 705.6 L642.0 705.6 L643.0 705.4 L644.0 705.6 L645.0 705.6 L646.0 705.5 L647.0 705.6 L648.0 705.7 L649.0 705.5 L650.0 705.5 L651.0 705.6 L652.0 705.4 L653.0 705.6 L654.0 705.6 L655.0 705.7 L656.0 705.7 L657.0 705.6 L658.0 705.5 L659.0 705.4 L660.0 705.4 L661.0 710.3 L662.0 705.4 L663.0 705.6 L664.0 709.7 L665.0 705.4 L666.0 705.6 L667.0 705.4 L668.0 705.6 L669.0 705.6 L670.0 705.5 L671.0 705.5 L672.0 705.6 L673.0 705.6 L674.0 711.2 L675.0 705.6 L676.0 705.5 L677.0 705.4 L678.0 705.5 L679.0 705.7 L680.0 705.4 L681.0 708.4 L682.0 705.5 L683.0 705.6 L684.0 705.6 L685.0 709.1 L686.0 705.6 L687.0 705.6 L688.0 705.6 L689.0 705.6 L690.0 705.4 L691.0 705.6 L692.0 705.5 L693.0 705.5 L694.0 705.4 L695.0 705.4 L696.0 705.5 L697.0 705.5 L698.0 705.5 L699.0 705.6 L700.0 702.5 L701.0 705.5 L702.0 705.4 L703.0 705.4 L704.0 708.9 L705.0 709.5 L706.0 705.6 L707.0 705.4 L708.0 705.5 L709.0 705.5 L710.0 705.6 L711.0 705.4 L712.0 702.6 L713.0 705.6 L714.0 705.6 L715.0 705.6 L716.0 706.2 L717.0 705.4 L718.0 711.5 L719.0 705.4 L720.0 705.4 L721.0 713.5 L722.0 705.6 L723.0 705.4 L724.0 710.4 L725.0 705.4 L726.0 705.6 L727.0 705.5 L728.0 705.6 L729.0 705.6 L730.0 705.5 L731.0 705.6 L732.0 705.6 L733.0 705.5 L734.0 705.6 L735.0 703.6 L736.0 705.4 L737.0 705.4 L738.0 705.6 L739.0 705.4 L740.0 705.4 L741.0 705.4 L742.0 705.6 L743.0 705.6 L744.0 705.5 L745.0 705.6 L746.0 705.5 L747.0 705.5 L748.0 705.4 L749.0 705.5 L750.0 705.6 L751.0 705.6 L752.0 705.4 L753.0 705.6 L754.0 705.5 L755.0 705.4 L756.0 705.5 L757.0 705.6 L758.0 705.4 L759.0 705.5 L760.0 702.6 L761.0 705.6 L762.0 705.6 L763.0 708.8 L764.0 705.4 L765.0 705.6 L766.0 705.4 L767.0 705.4 L768.0 705.4 L769.0 705.5 L770.0 705.4 L771.0 705.5 L772.0 705.5 L773.0 705.4 L774.0 705.5 L775.0 712.4 L776.0 705.4 L777.0 705.4 L778.0 705.6 L779.0 705.6 L780.0 705.5 L781.0 705.5 L782.0 705.4 L783.0 705.5 L784.0 705.5 L785.0 705.5 L786.0 705.3 L787.0 705.5 L788.0 705.5 L789.0 705.5 L790.0 703.5 L791.0 705.5 L792.0 705.4 L793.0 705.6 L794.0 705.4 L795.0 705.5 L796.0 705.4 L797.0 705.3 L798.0 705.4 L799.0 705.4 L800.0 705.5 L801.0 705.5 L802.0 705.5 L803.0 705.5 L804.0 705.5 L805.0 705.4 L806.0 705.5 L807.0 705.5 L808.0 705.5 L809.0 705.4 L810.0 705.5 L811.0 705.4 L812.0 705.6 L813.0 705.6 L814.0 705.4 L815.0 705.3 L816.0 705.5 L817.0 705.6 L818.0 705.5 L819.0 705.5 L820.0 703.5 L821.0 705.3 L822.0 705.5 L823.0 705.6 L824.0 705.4 L825.0 705.4 L826.0 705.6 L827.0 705.5 L828.0 705.5 L829.0 705.3 L830.0 705.3 L831.0 705.6 L832.0 705.5 L833.0 705.4 L834.0 705.4 L835.0 705.3 L836.0 705.5 L837.0 705.5 L838.0 705.4 L839.0 705.5 L840.0 705.5 L841.0 705.3 L842.0 705.5 L843.0 705.4 L844.0 705.4 L845.0 705.5 L846.0 705.5 L847.0 705.5 L848.0 705.4 L849.0 705.5 L850.0 702.4 L851.0 705.4 L852.0 705.4 L853.0 705.4 L854.0 705.4 L855.0 705.5 L856.0 705.5 L857.0 705.6 L858.0 705.3 L859.0 705.3 L860.0 703.5 L861.0 704.2 L862.0 703.2 L863.0 702.0 L864.0 702.7 L865.0 703.4 L866.0 704.3 L867.0 703.3 L868.0 702.3 L869.0 701.1 L870.0 700.1 L871.0 699.8 L872.0 699.1 L873.0 698.7 L874.0 698.2 L874.6 712.1 L875.0 686.2 L875.9 686.1 L876.8 686.2 L877.6 686.3 L878.5 686.3 L879.0 708.2 L880.0 722.0 L881.0 722.0 L881.2 686.0 L882.1 686.1 L883.1 686.2 L884.0 686.0 L884.2 697.3 L885.1 697.1 L886.1 697.2 L887.0 697.2 L887.2 722.2 L888.2 722.0 L889.2 722.1 L890.2 722.1 L891.2 722.1 L892.1 722.3 L893.1 722.2 L894.1 722.1 L895.1 722.2 L896.1 722.2 L897.1 722.2 L898.1 722.1 L899.1 722.0 L900.1 722.2 L901.0 722.2 L902.0 722.1 L903.0 722.2 L904.0 722.2 L905.0 722.2 L905.2 714.0 L906.2 713.1 L907.1 712.3 L908.1 711.2 L909.0 710.2 L910.0 709.1 L911.0 709.0 L912.0 709.3 L913.0 709.0 L914.0 709.2 L915.0 709.2 L916.0 709.1 L917.0 709.2 L918.0 709.2 L919.0 709.2 L920.0 709.1 L921.0 709.1 L922.0 709.2 L923.0 709.2 L924.0 709.2 L925.0 709.3 L926.0 713.8 L927.0 718.2 L927.2 722.2 L928.2 722.1 L929.2 722.2 L930.1 722.2 L931.1 722.2 L932.1 722.1 L933.1 722.2 L934.1 722.1 L935.0 722.1 L936.0 722.2 L937.0 722.2 L937.2 714.2 L938.2 712.9 L939.1 711.7 L940.0 710.5 L941.0 709.2 L942.0 710.8 L943.0 709.1 L944.0 709.0 L945.0 709.3 L946.0 714.4 L947.0 709.0 L948.0 709.3 L949.0 709.2 L950.0 709.1 L951.0 709.0 L952.0 709.1 L953.0 709.1 L954.0 709.0 L955.0 709.0 L956.0 709.2 L957.0 709.1 L958.0 709.2 L959.0 709.3 L960.0 709.1 L961.0 709.2 L961.5 722.2 L962.4 722.3 L963.3 722.1 L964.2 722.2 L965.2 722.2 L966.1 722.1 L967.0 722.1 L967.2 715.0 L968.1 715.7 L969.0 710.2 L970.0 710.2 L971.0 710.1 L972.0 710.1 L973.0 710.1 L974.0 710.1 L975.0 709.8 L976.0 709.8 L977.0 709.8 L978.0 709.7 L979.0 709.7 L980.0 709.8 L981.0 709.7 L982.0 709.8 L983.0 709.6 L984.0 709.6 L985.0 709.5 L986.0 709.3 L987.0 709.3 L988.0 709.2 L989.0 709.2 L990.0 709.3 L991.0 709.3 L992.0 709.2 L993.0 709.2 L993.2 722.3 L994.2 722.1 L995.2 722.3 L996.1 722.1 L997.1 722.2 L998.1 722.0 L999.1 722.2 L1000.0 722.2 L1001.0 722.0 L1002.0 722.1 L1002.2 714.1 L1003.1 715.2 L1004.1 710.2 L1005.0 708.0 L1006.0 708.0 L1007.0 708.1 L1008.0 708.2 L1009.0 708.2 L1010.0 708.0 L1011.0 708.1 L1012.0 708.0 L1013.0 708.2 L1014.0 708.0 L1015.0 708.3 L1016.0 708.2 L1017.0 708.2 L1018.0 708.1 L1019.0 708.1 L1020.0 708.0 L1021.0 708.0 L1022.0 708.1 L1023.0 708.2 L1024.0 708.1 L1025.0 708.0 L1026.0 708.0 L1027.0 708.3 L1028.0 708.3 L1029.0 708.2 L1030.0 708.1 L1031.0 708.1 L1032.0 708.1 L1033.0 708.1 L1034.0 708.1 L1035.0 708.0 L1036.0 708.2 L1037.0 708.1 L1038.0 708.2 L1039.0 708.2 L1040.0 708.0 L1040.0 723.3 Z" fill="#e99a9b"/></svg>
<svg class="a" style="left:0;top:0" width="1040" height="720"><path d="M904.6 723.3 L904.6 722.0 L904.6 697.0 L905.2 697.0 L905.2 722.0 L905.2 723.3 Z" fill="#f2c8c8"/></svg>
<div class="t" style="right:433px;top:693.1px;font-size:14px;color:#606468">52.00<span style="font-size:11.3px;color:#8a8e94;margin-left:6px;position:relative;top:-0.5px">Hz (0, auto)</span></div>
<div class="a" style="left:311px;top:149.6px;width:563px;height:2.4px;background:#6ee01c"></div>
<div class="a" style="left:875px;top:149.6px;width:8px;height:2.4px;background:#6ee01c"></div>
<div class="a" style="left:905px;top:149.6px;width:22px;height:2.4px;background:#6ee01c"></div>
<div class="a" style="left:937px;top:149.6px;width:25px;height:2.4px;background:#6ee01c"></div>
<div class="a" style="left:967px;top:149.6px;width:27px;height:2.4px;background:#6ee01c"></div>
<div class="a" style="left:1002px;top:149.6px;width:25px;height:2.4px;background:#6ee01c"></div>
<div class="a" style="left:1030px;top:149.6px;width:10px;height:2.4px;background:#6ee01c"></div>
<div class="a" style="left:375px;top:152px;width:1px;height:568px;background:repeating-linear-gradient(to bottom,rgba(150,155,165,.8) 0 2px,transparent 2px 4px)"></div>
<div class="a" style="left:503px;top:152px;width:1px;height:568px;background:repeating-linear-gradient(to bottom,rgba(150,155,165,.8) 0 2px,transparent 2px 4px)"></div>
<div class="a" style="left:630px;top:152px;width:1px;height:568px;background:repeating-linear-gradient(to bottom,rgba(150,155,165,.8) 0 2px,transparent 2px 4px)"></div>
<div class="a" style="left:758px;top:152px;width:1px;height:568px;background:repeating-linear-gradient(to bottom,rgba(150,155,165,.8) 0 2px,transparent 2px 4px)"></div>
<div class="a" style="left:885px;top:152px;width:1px;height:568px;background:repeating-linear-gradient(to bottom,rgba(150,155,165,.8) 0 2px,transparent 2px 4px)"></div>
<div class="a" style="left:1013px;top:152px;width:1px;height:568px;background:repeating-linear-gradient(to bottom,rgba(150,155,165,.8) 0 2px,transparent 2px 4px)"></div>
<div class="a" style="left:599px;top:152px;width:13.5px;height:568px;background:rgba(190,90,190,.11)"></div>
<div class="a" style="left:612px;top:152px;width:1px;height:568px;background:rgba(60,60,70,.6)"></div>
<div class="t" style="left:585px;top:155px;font-size:11.3px;color:rgba(215,90,215,.7);font-style:italic">44m 13s</div>
<div class="a" style="left:612px;top:297.5px;width:344px;height:89.5px;background:#fff;border-radius:4px;box-shadow:0 1px 5px rgba(0,0,0,.25);overflow:hidden"><div class="a" style="left:0;top:0;width:6px;height:90px;background:#f8c99b"></div></div>
<div class="t" style="left:632px;top:313px;font-size:13px;color:#3a3d41;letter-spacing:-0.25px"><b>ручное не работает / закрыт:</b> <span style="letter-spacing:0.55px;color:#55595e">ручной закрыт</span></div>
<svg class="a" style="left:632px;top:339px" width="11" height="11" viewBox="0 0 11 11"><circle cx="5.5" cy="5.5" r="4.6" fill="none" stroke="#3a3d41" stroke-width="1.2"/><path d="M5.5 2.8V5.7L7.5 7.2" fill="none" stroke="#3a3d41" stroke-width="1.1"/></svg>
<div class="t" style="left:646px;top:339.5px;font-size:11.6px;color:#3a3d41;font-weight:bold">44m 13s</div>
<svg class="a" style="left:635px;top:363px" width="7" height="8" viewBox="0 0 7 8"><path d="M0.5 0.5L6.5 4L0.5 7.5Z" fill="#26292d"/></svg>
<div class="t" style="left:646px;top:361px;font-size:11.7px;color:#a3a6ab">29 сентября 16:31:36</div>
<div class="a" style="left:781px;top:364px;width:6.5px;height:6.5px;background:#26292d"></div>
<div class="t" style="left:793px;top:361px;font-size:11.7px;color:#a3a6ab">29 сентября 17:15:49</div>
</div></body></html>
